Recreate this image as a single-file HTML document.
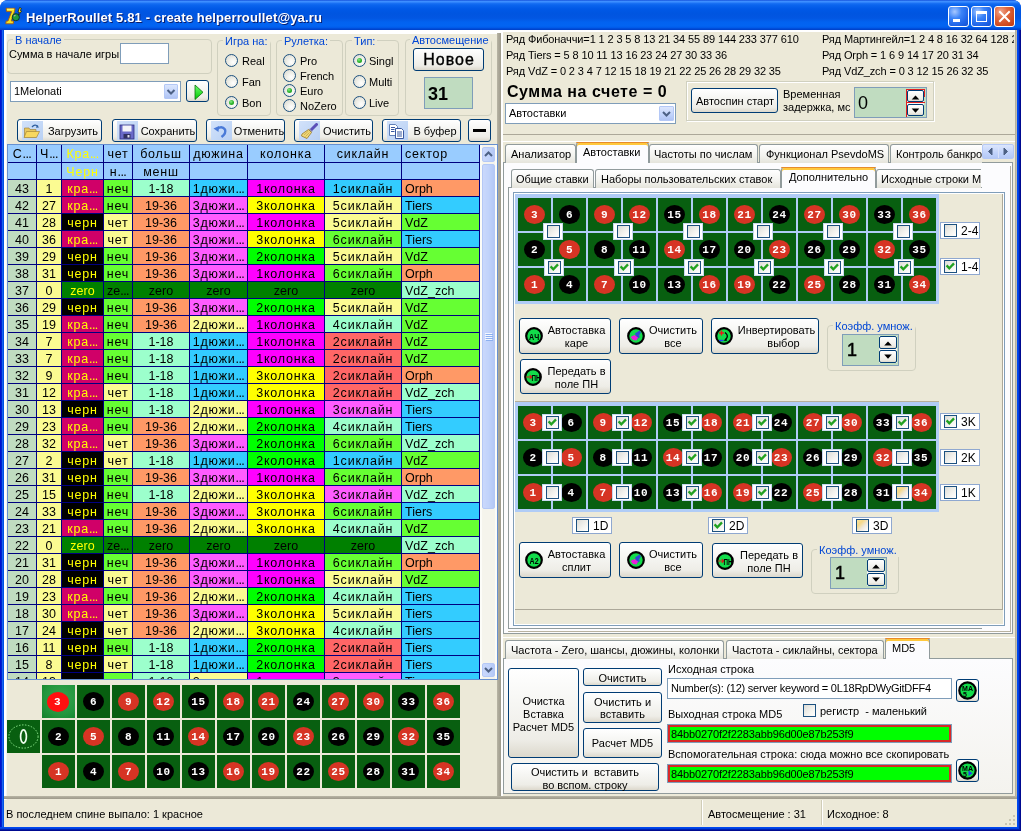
<!DOCTYPE html><html><head><meta charset="utf-8"><title>HelperRoullet</title><style>
*{margin:0;padding:0;box-sizing:border-box}
html,body{width:1021px;height:831px;overflow:hidden;background:#fff}
body{position:relative;font-family:"Liberation Sans",sans-serif;font-size:11px;color:#000}
div{position:absolute}
.t{white-space:pre}
.btn{border:1px solid #003C74;border-radius:3px;background:linear-gradient(180deg,#FFFFFF 0%,#F6F6F3 40%,#EEEDE7 80%,#DCD8CC 100%)}
.grp{border:1px solid #D0D0BF;border-radius:4px}
.rad{border:1px solid #1C5180;border-radius:50%;background:radial-gradient(circle at 65% 65%,#FFFFFF 0%,#F0F0EA 40%,#D5D5CC 100%)}
.rdot{left:3px;top:3px;width:5px;height:5px;border-radius:50%;background:radial-gradient(circle at 40% 35%,#8CEB8C 0%,#2BB52B 50%,#1C8A1C 100%)}
.chk{border:1px solid #1C5180;background:linear-gradient(135deg,#DCDCD7 0%,#F4F4F0 60%,#FFFFFF 100%)}
.gc{font-size:12.5px;line-height:18px;white-space:nowrap;overflow:hidden}
.num{text-align:center;color:#fff;font-family:"Liberation Mono",monospace;font-weight:bold;white-space:pre}
.sbb{border:1px solid #B4C8F6;border-radius:2px;background:linear-gradient(90deg,#CAD8FC,#C1D3FB 50%,#B4C8F6)}
.cbb{border:1px solid #B4C8F6;border-radius:1px;background:linear-gradient(180deg,#DCE6FD,#C1D3FB 60%,#B0C4F4)}
.chk.hov{background:linear-gradient(135deg,#F9E49F 0%,#F5D88A 30%,#EFE9DE 60%,#FFFFFF 100%)}
</style></head><body><div style="left:0;top:0;width:1021px;height:831px;overflow:hidden;will-change:transform"><div style="left:0;top:0;width:1021px;height:831px;background:#0842D8;border-radius:8px 8px 0 0"></div><div style="left:0;top:0;width:1021px;height:30px;border-radius:8px 8px 0 0;background:linear-gradient(180deg,#0A3FD0 0px,#3B8DFF 1px,#3F8FFF 2px,#1C73F5 3px,#0A64EE 5px,#0058E6 9px,#0055E0 14px,#0256E2 18px,#0262F0 22px,#0264F2 26px,#0058E8 28px,#0043CC 29px,#0043CC 30px)"></div><div style="left:0px;top:30px;width:1px;height:801px;background:#0012D0"></div><div style="left:1px;top:30px;width:1px;height:801px;background:#0024CC"></div><div style="left:2px;top:30px;width:1px;height:801px;background:#1A62F2"></div><div style="left:3px;top:30px;width:1px;height:801px;background:#0052E2"></div><div style="left:1017px;top:30px;width:1px;height:801px;background:#0048F0"></div><div style="left:0px;top:827px;width:1021px;height:1px;background:#0048F0"></div><div style="left:1018px;top:30px;width:1px;height:801px;background:#0040E0"></div><div style="left:0px;top:828px;width:1021px;height:1px;background:#0040E0"></div><div style="left:1019px;top:30px;width:1px;height:801px;background:#0020B0"></div><div style="left:0px;top:829px;width:1021px;height:1px;background:#0020B0"></div><div style="left:1020px;top:30px;width:1px;height:801px;background:#000A90"></div><div style="left:0px;top:830px;width:1021px;height:1px;background:#000A90"></div><div style="left:4px;top:30px;width:1013px;height:797px;background:#ECE9D8"></div><svg style="position:absolute;left:0px;top:0px" width="26" height="28" viewBox="0 0 26 28"><path d="M6 8.3 L15 8.3 L14.6 11.2 L11.2 21 L13.6 21 L13.2 23.8 L5.8 23.8 L6.2 21 L8 21 L11.6 11.6 L6.6 11.6 Z" fill="#F4E020" stroke="#A85A10" stroke-width="0.9" stroke-linejoin="round"/><path d="M7 9.2 L13.8 9.2" stroke="#FFFF90" stroke-width="1"/><circle cx="15.8" cy="17.2" r="3.6" fill="#1E9A40" stroke="#0A2A30" stroke-width="0.9"/><path d="M14 16 L15.5 15.5" stroke="#D8A8B8" stroke-width="1.1"/><path d="M19.6 7.6 L21.4 8.4 L20.2 10.6 L21.6 11 L18.6 15.2 L19.4 12.2 L18 11.8 Z" fill="#FFF020" stroke="#101010" stroke-width="0.7" stroke-linejoin="round"/></svg><div class="t" style="left:27px;top:12.00px;font-size:13px;line-height:13px;color:#0A1E6E;font-weight:bold;letter-spacing:0.14px">HelperRoullet 5.81 - create helperroullet@ya.ru</div><div class="t" style="left:26px;top:11.00px;font-size:13px;line-height:13px;color:#FFFFFF;font-weight:bold;letter-spacing:0.14px">HelperRoullet 5.81 - create helperroullet@ya.ru</div><div style="left:948px;top:6px;width:21px;height:21px;border:1px solid #FFFFFF;border-radius:3px;background:radial-gradient(circle at 30% 25%,#A8C8FF 0%,#3C84F8 35%,#1F64E8 70%,#1450D0 100%)"></div><div style="left:971px;top:6px;width:21px;height:21px;border:1px solid #FFFFFF;border-radius:3px;background:radial-gradient(circle at 30% 25%,#A8C8FF 0%,#3C84F8 35%,#1F64E8 70%,#1450D0 100%)"></div><div style="left:994px;top:6px;width:21px;height:21px;border:1px solid #FFFFFF;border-radius:3px;background:radial-gradient(circle at 30% 25%,#F0A890 0%,#E06840 35%,#D04C20 70%,#C03810 100%)"></div><div style="left:953px;top:19px;width:7px;height:3px;background:#fff"></div><div style="left:976px;top:11px;width:11px;height:11px;border:1px solid #fff;border-top-width:3px"></div><svg style="position:absolute;left:994px;top:6px" width="21" height="21" viewBox="0 0 21 21"><path d="M6 6 L15 15 M15 6 L6 15" stroke="#fff" stroke-width="2" stroke-linecap="square"/></svg><div style="left:4px;top:30px;width:497px;height:770px;background:#ECE9D8;border-top:4px solid #fff;border-left:2px solid #fff;box-shadow:inset 1px 0 0 #F6F5EE"></div><div style="left:497px;top:33px;width:4px;height:766px;background:linear-gradient(90deg,#B9B6A6,#ACA899 40%,#9D9A8B)"></div><div style="left:4px;top:796px;width:497px;height:3px;background:linear-gradient(180deg,#B9B6A6,#ACA899 40%,#9D9A8B)"></div><div class="grp" style="left:7px;top:39px;width:205px;height:35px;"></div><div class="t" style="left:13px;top:34px;height:13px;width:50.8px;background:#ECE9D8"></div><div class="t" style="left:15px;top:34.69px;font-size:11px;line-height:11px;color:#0046D5;font-weight:normal;">В начале</div><div class="t" style="left:9px;top:48.69px;font-size:11px;line-height:11px;color:#000;font-weight:normal;">Сумма в начале игры</div><div style="left:120px;top:43px;width:49px;height:21px;background:#fff;border:1px solid #7F9DB9"></div><div style="left:10px;top:81px;width:171px;height:21px;background:#fff;border:1px solid #7F9DB9"></div><div class="t" style="left:14px;top:85.69px;font-size:11px;line-height:11px;color:#000;font-weight:normal;">1Melonati</div><div class="cbb" style="left:164px;top:84px;width:14px;height:15px"></div><svg style="position:absolute;left:164px;top:84px" width="14" height="15" viewBox="0 0 14 15"><path d="M3.5 6 L7 9.5 L10.5 6" stroke="#4D6185" stroke-width="2" fill="none"/></svg><div class="btn" style="left:186px;top:80px;width:23px;height:22px;"></div><svg style="position:absolute;left:186px;top:80px" width="23" height="22" viewBox="0 0 23 22"><defs><linearGradient id="pg" x1="0" y1="0" x2="0" y2="1"><stop offset="0" stop-color="#70FF70"/><stop offset="1" stop-color="#00C800"/></linearGradient></defs><path d="M9 5 L17 12.3 L9 19.5 Z" fill="url(#pg)" stroke="#087008" stroke-width="0.8"/></svg><div class="grp" style="left:217px;top:40px;width:54px;height:76px;"></div><div class="t" style="left:223px;top:35px;height:13px;width:46.5px;background:#ECE9D8"></div><div class="t" style="left:225px;top:35.69px;font-size:11px;line-height:11px;color:#0046D5;font-weight:normal;">Игра на:</div><div class="rad" style="left:225px;top:54px;width:13px;height:13px;"></div><div class="t" style="left:242px;top:55.69px;font-size:11px;line-height:11px;color:#000;font-weight:normal;">Real</div><div class="rad" style="left:225px;top:75px;width:13px;height:13px;"></div><div class="t" style="left:242px;top:76.69px;font-size:11px;line-height:11px;color:#000;font-weight:normal;">Fan</div><div class="rad" style="left:225px;top:96px;width:13px;height:13px;"><div class="rdot"></div></div><div class="t" style="left:242px;top:97.69px;font-size:11px;line-height:11px;color:#000;font-weight:normal;">Bon</div><div class="grp" style="left:276px;top:40px;width:67px;height:76px;"></div><div class="t" style="left:282px;top:35px;height:13px;width:48.1px;background:#ECE9D8"></div><div class="t" style="left:284px;top:35.69px;font-size:11px;line-height:11px;color:#0046D5;font-weight:normal;">Рулетка:</div><div class="rad" style="left:283px;top:54px;width:13px;height:13px;"></div><div class="t" style="left:300px;top:55.69px;font-size:11px;line-height:11px;color:#000;font-weight:normal;">Pro</div><div class="rad" style="left:283px;top:69px;width:13px;height:13px;"></div><div class="t" style="left:300px;top:70.69px;font-size:11px;line-height:11px;color:#000;font-weight:normal;">French</div><div class="rad" style="left:283px;top:84px;width:13px;height:13px;"><div class="rdot"></div></div><div class="t" style="left:300px;top:85.69px;font-size:11px;line-height:11px;color:#000;font-weight:normal;">Euro</div><div class="rad" style="left:283px;top:99px;width:13px;height:13px;"></div><div class="t" style="left:300px;top:100.69px;font-size:11px;line-height:11px;color:#000;font-weight:normal;">NoZero</div><div class="grp" style="left:345px;top:40px;width:54px;height:76px;"></div><div class="t" style="left:352px;top:35px;height:13px;width:25.4px;background:#ECE9D8"></div><div class="t" style="left:354px;top:35.69px;font-size:11px;line-height:11px;color:#0046D5;font-weight:normal;">Тип:</div><div class="rad" style="left:353px;top:54px;width:13px;height:13px;"><div class="rdot"></div></div><div class="t" style="left:369px;top:55.69px;font-size:11px;line-height:11px;color:#000;font-weight:normal;">Singl</div><div class="rad" style="left:353px;top:75px;width:13px;height:13px;"></div><div class="t" style="left:369px;top:76.69px;font-size:11px;line-height:11px;color:#000;font-weight:normal;">Multi</div><div class="rad" style="left:353px;top:96px;width:13px;height:13px;"></div><div class="t" style="left:369px;top:97.69px;font-size:11px;line-height:11px;color:#000;font-weight:normal;">Live</div><div class="grp" style="left:405px;top:39px;width:87px;height:77px;"></div><div class="t" style="left:410px;top:34px;height:13px;width:80.6px;background:#ECE9D8"></div><div class="t" style="left:412px;top:34.69px;font-size:11px;line-height:11px;color:#0046D5;font-weight:normal;">Автосмещение</div><div class="btn" style="left:413px;top:48px;width:71px;height:23px;"></div><div class="t" style="left:349.0px;width:200px;text-align:center;top:52.46px;font-size:16px;line-height:16px;color:#000;font-weight:normal;letter-spacing:1px;-webkit-text-stroke:0.35px #000">Новое</div><div style="left:424px;top:77px;width:49px;height:32px;background:#C0DCC0;border:1px solid #7F9DB9"></div><div class="t" style="left:428px;top:84.76px;font-size:18px;line-height:18px;color:#000;font-weight:bold;">31</div><div class="btn" style="left:17px;top:119px;width:85px;height:23px;"></div><div style="left:22px;top:121px;width:21px;height:19px;background:linear-gradient(135deg,#D2E2FA,#B8D0F4)"></div><svg style="position:absolute;left:23px;top:123px" width="18" height="17" viewBox="0 0 18 17"><path d="M1.5 5 L6 5 L7 6.5 L13 6.5 L13 14 L1.5 14 Z" fill="#E8C860" stroke="#9A7A30" stroke-width="0.6"/><path d="M3.5 8.5 L16.5 8.5 L13.5 14.5 L1 14.5 Z" fill="#F8D860" stroke="#9A7A30" stroke-width="0.6"/><path d="M9 4 Q12 0.5 15 3.5" stroke="#3060A0" stroke-width="1.3" fill="none"/><path d="M14 2 L16 4.5 L13 4.8 Z" fill="#3060A0"/></svg><div class="t" style="left:-27.0px;width:200px;text-align:center;top:125.69px;font-size:11px;line-height:11px;color:#000;font-weight:normal;">Загрузить</div><div class="btn" style="left:112px;top:119px;width:85px;height:23px;"></div><div style="left:117px;top:121px;width:21px;height:19px;background:linear-gradient(135deg,#D2E2FA,#B8D0F4)"></div><svg style="position:absolute;left:118px;top:123px" width="18" height="17" viewBox="0 0 18 17"><rect x="2" y="2" width="14" height="14" fill="#6A6AC8" stroke="#303080" stroke-width="0.8"/><rect x="4.5" y="2.5" width="9" height="6" fill="#F4F4F8"/><rect x="5.5" y="11" width="7" height="4.5" fill="#303060"/><rect x="9.5" y="12" width="2" height="2.5" fill="#E0E0F0"/></svg><div class="t" style="left:68.0px;width:200px;text-align:center;top:125.69px;font-size:11px;line-height:11px;color:#000;font-weight:normal;">Сохранить</div><div class="btn" style="left:206px;top:119px;width:79px;height:23px;"></div><div style="left:211px;top:121px;width:21px;height:19px;background:linear-gradient(135deg,#D2E2FA,#B8D0F4)"></div><svg style="position:absolute;left:212px;top:123px" width="18" height="17" viewBox="0 0 18 17"><path d="M5 6 Q10 2.5 13 6.5 Q14.5 10.5 9.5 14" stroke="#4A7AD8" stroke-width="2.4" fill="none"/><path d="M1.5 5.5 L7 3 L6.5 9 Z" fill="#4A7AD8"/></svg><div class="t" style="left:159.0px;width:200px;text-align:center;top:125.69px;font-size:11px;line-height:11px;color:#000;font-weight:normal;">Отменить</div><div class="btn" style="left:294px;top:119px;width:79px;height:23px;"></div><div style="left:299px;top:121px;width:21px;height:19px;background:linear-gradient(135deg,#D2E2FA,#B8D0F4)"></div><svg style="position:absolute;left:300px;top:123px" width="18" height="17" viewBox="0 0 18 17"><path d="M16.5 1.5 L11 7" stroke="#5A50B8" stroke-width="3" stroke-linecap="round"/><path d="M9.5 5.5 L12.5 8.5 L11.5 9.5 L8.5 6.5 Z" fill="#9A9AB0"/><path d="M8.5 6.5 L11.5 9.5 L7 15.5 L1.5 13 L2 11 Z" fill="#F0D878" stroke="#9A7A28" stroke-width="0.8"/><path d="M4 12 L8.5 8 M5.5 13.5 L9.5 9.5" stroke="#C8A848" stroke-width="0.8"/></svg><div class="t" style="left:247.0px;width:200px;text-align:center;top:125.69px;font-size:11px;line-height:11px;color:#000;font-weight:normal;">Очистить</div><div class="btn" style="left:382px;top:119px;width:79px;height:23px;"></div><div style="left:387px;top:121px;width:21px;height:19px;background:linear-gradient(135deg,#D2E2FA,#B8D0F4)"></div><svg style="position:absolute;left:388px;top:123px" width="18" height="17" viewBox="0 0 18 17"><path d="M1.5 1.5 L7.5 1.5 L9.5 3.5 L9.5 12.5 L1.5 12.5 Z" fill="#FFFFFF" stroke="#6080B8" stroke-width="1"/><path d="M7.5 5.5 L13.5 5.5 L15.5 7.5 L15.5 15.5 L7.5 15.5 Z" fill="#FFFFFF" stroke="#3858A0" stroke-width="1"/><path d="M9 9 L14 9 M9 11 L14 11 M9 13 L14 13 M3 4.5 L7 4.5 M3 6.5 L6.5 6.5 M3 8.5 L6.5 8.5" stroke="#3858A0" stroke-width="1"/></svg><div class="t" style="left:335.0px;width:200px;text-align:center;top:125.69px;font-size:11px;line-height:11px;color:#000;font-weight:normal;">В буфер</div><div class="btn" style="left:468px;top:119px;width:23px;height:23px;"></div><div style="left:473px;top:129px;width:13px;height:3px;background:#000"></div><div style="left:7px;top:144px;width:491px;height:536px;overflow:hidden;background:#F5F4EC;border:1px solid #6690D0"><div style="left:0px;top:0px;width:472px;height:534px;background:#000080"></div><div class="gc" style="left:0px;top:0px;width:28px;height:17px;background:#99CCFF;color:#000;text-align:center;letter-spacing:0.8px;">С<span style="letter-spacing:-0.6px">...</span></div><div class="gc" style="left:0px;top:18px;width:28px;height:16px;background:#99CCFF;color:#000;text-align:center;"></div><div class="gc" style="left:29px;top:0px;width:24px;height:17px;background:#99CCFF;color:#000;text-align:center;letter-spacing:0.8px;">Ч<span style="letter-spacing:-0.6px">...</span></div><div class="gc" style="left:29px;top:18px;width:24px;height:16px;background:#99CCFF;color:#000;text-align:center;"></div><div class="gc" style="left:54px;top:0px;width:41px;height:17px;background:#99CCFF;color:#FFFF00;text-align:center;letter-spacing:0.8px;">Кра<span style="letter-spacing:-0.6px">...</span></div><div class="gc" style="left:54px;top:18px;width:41px;height:16px;background:#99CCFF;color:#FFFF00;text-align:center;letter-spacing:0.8px;">Черн</div><div class="gc" style="left:96px;top:0px;width:28px;height:17px;background:#99CCFF;color:#000;text-align:center;letter-spacing:0.8px;">чет</div><div class="gc" style="left:96px;top:18px;width:28px;height:16px;background:#99CCFF;color:#000;text-align:center;letter-spacing:0.8px;">н<span style="letter-spacing:-0.6px">...</span></div><div class="gc" style="left:125px;top:0px;width:56px;height:17px;background:#99CCFF;color:#000;text-align:center;letter-spacing:0.8px;">больш</div><div class="gc" style="left:125px;top:18px;width:56px;height:16px;background:#99CCFF;color:#000;text-align:center;letter-spacing:0.8px;">менш</div><div class="gc" style="left:182px;top:0px;width:57px;height:17px;background:#99CCFF;color:#000;text-align:center;letter-spacing:0.8px;">дюжина</div><div class="gc" style="left:182px;top:18px;width:57px;height:16px;background:#99CCFF;color:#000;text-align:center;"></div><div class="gc" style="left:240px;top:0px;width:76px;height:17px;background:#99CCFF;color:#000;text-align:center;letter-spacing:0.8px;">колонка</div><div class="gc" style="left:240px;top:18px;width:76px;height:16px;background:#99CCFF;color:#000;text-align:center;"></div><div class="gc" style="left:317px;top:0px;width:76px;height:17px;background:#99CCFF;color:#000;text-align:center;letter-spacing:0.8px;">сиклайн</div><div class="gc" style="left:317px;top:18px;width:76px;height:16px;background:#99CCFF;color:#000;text-align:center;"></div><div class="gc" style="left:394px;top:0px;width:77px;height:17px;background:#99CCFF;color:#000;text-align:left;padding-left:3px;letter-spacing:0.8px;">сектор</div><div class="gc" style="left:394px;top:18px;width:77px;height:16px;background:#99CCFF;color:#000;text-align:left;padding-left:3px;"></div><div class="gc" style="left:0px;top:35px;width:28px;height:16px;background:#C0DCC0;color:#000;text-align:center;">43</div><div class="gc" style="left:29px;top:35px;width:24px;height:16px;background:#FBFB92;color:#000;text-align:center;">1</div><div class="gc" style="left:54px;top:35px;width:41px;height:16px;background:#D00068;color:#FFFF00;text-align:center;letter-spacing:0.8px;">кра<span style="letter-spacing:-0.6px">...</span></div><div class="gc" style="left:96px;top:35px;width:28px;height:16px;background:#66FF33;color:#000;text-align:center;letter-spacing:0.8px;">неч</div><div class="gc" style="left:125px;top:35px;width:56px;height:16px;background:#9CFFCC;color:#000;text-align:center;">1-18</div><div class="gc" style="left:182px;top:35px;width:57px;height:16px;background:#33CCFF;color:#000;text-align:center;letter-spacing:0.8px;">1дюжи<span style="letter-spacing:-0.6px">...</span></div><div class="gc" style="left:240px;top:35px;width:76px;height:16px;background:#FF00FF;color:#000;text-align:center;letter-spacing:0.8px;">1колонка</div><div class="gc" style="left:317px;top:35px;width:76px;height:16px;background:#33CCFF;color:#000;text-align:center;letter-spacing:0.8px;">1сиклайн</div><div class="gc" style="left:394px;top:35px;width:77px;height:16px;background:#FF9966;color:#000;text-align:left;padding-left:3px;">Orph</div><div class="gc" style="left:0px;top:52px;width:28px;height:16px;background:#C0DCC0;color:#000;text-align:center;">42</div><div class="gc" style="left:29px;top:52px;width:24px;height:16px;background:#FBFB92;color:#000;text-align:center;">27</div><div class="gc" style="left:54px;top:52px;width:41px;height:16px;background:#D00068;color:#FFFF00;text-align:center;letter-spacing:0.8px;">кра<span style="letter-spacing:-0.6px">...</span></div><div class="gc" style="left:96px;top:52px;width:28px;height:16px;background:#66FF33;color:#000;text-align:center;letter-spacing:0.8px;">неч</div><div class="gc" style="left:125px;top:52px;width:56px;height:16px;background:#FF9966;color:#000;text-align:center;">19-36</div><div class="gc" style="left:182px;top:52px;width:57px;height:16px;background:#FF5CFF;color:#000;text-align:center;letter-spacing:0.8px;">3дюжи<span style="letter-spacing:-0.6px">...</span></div><div class="gc" style="left:240px;top:52px;width:76px;height:16px;background:#FFFF00;color:#000;text-align:center;letter-spacing:0.8px;">3колонка</div><div class="gc" style="left:317px;top:52px;width:76px;height:16px;background:#FBFB92;color:#000;text-align:center;letter-spacing:0.8px;">5сиклайн</div><div class="gc" style="left:394px;top:52px;width:77px;height:16px;background:#33CCFF;color:#000;text-align:left;padding-left:3px;">Tiers</div><div class="gc" style="left:0px;top:69px;width:28px;height:16px;background:#C0DCC0;color:#000;text-align:center;">41</div><div class="gc" style="left:29px;top:69px;width:24px;height:16px;background:#FBFB92;color:#000;text-align:center;">28</div><div class="gc" style="left:54px;top:69px;width:41px;height:16px;background:#000000;color:#FFFF00;text-align:center;letter-spacing:0.8px;">черн</div><div class="gc" style="left:96px;top:69px;width:28px;height:16px;background:#FBFB92;color:#000;text-align:center;letter-spacing:0.8px;">чет</div><div class="gc" style="left:125px;top:69px;width:56px;height:16px;background:#FF9966;color:#000;text-align:center;">19-36</div><div class="gc" style="left:182px;top:69px;width:57px;height:16px;background:#FF5CFF;color:#000;text-align:center;letter-spacing:0.8px;">3дюжи<span style="letter-spacing:-0.6px">...</span></div><div class="gc" style="left:240px;top:69px;width:76px;height:16px;background:#FF00FF;color:#000;text-align:center;letter-spacing:0.8px;">1колонка</div><div class="gc" style="left:317px;top:69px;width:76px;height:16px;background:#FBFB92;color:#000;text-align:center;letter-spacing:0.8px;">5сиклайн</div><div class="gc" style="left:394px;top:69px;width:77px;height:16px;background:#66FF33;color:#000;text-align:left;padding-left:3px;">VdZ</div><div class="gc" style="left:0px;top:86px;width:28px;height:16px;background:#C0DCC0;color:#000;text-align:center;">40</div><div class="gc" style="left:29px;top:86px;width:24px;height:16px;background:#FBFB92;color:#000;text-align:center;">36</div><div class="gc" style="left:54px;top:86px;width:41px;height:16px;background:#D00068;color:#FFFF00;text-align:center;letter-spacing:0.8px;">кра<span style="letter-spacing:-0.6px">...</span></div><div class="gc" style="left:96px;top:86px;width:28px;height:16px;background:#FBFB92;color:#000;text-align:center;letter-spacing:0.8px;">чет</div><div class="gc" style="left:125px;top:86px;width:56px;height:16px;background:#FF9966;color:#000;text-align:center;">19-36</div><div class="gc" style="left:182px;top:86px;width:57px;height:16px;background:#FF5CFF;color:#000;text-align:center;letter-spacing:0.8px;">3дюжи<span style="letter-spacing:-0.6px">...</span></div><div class="gc" style="left:240px;top:86px;width:76px;height:16px;background:#FFFF00;color:#000;text-align:center;letter-spacing:0.8px;">3колонка</div><div class="gc" style="left:317px;top:86px;width:76px;height:16px;background:#66FF33;color:#000;text-align:center;letter-spacing:0.8px;">6сиклайн</div><div class="gc" style="left:394px;top:86px;width:77px;height:16px;background:#33CCFF;color:#000;text-align:left;padding-left:3px;">Tiers</div><div class="gc" style="left:0px;top:103px;width:28px;height:16px;background:#C0DCC0;color:#000;text-align:center;">39</div><div class="gc" style="left:29px;top:103px;width:24px;height:16px;background:#FBFB92;color:#000;text-align:center;">29</div><div class="gc" style="left:54px;top:103px;width:41px;height:16px;background:#000000;color:#FFFF00;text-align:center;letter-spacing:0.8px;">черн</div><div class="gc" style="left:96px;top:103px;width:28px;height:16px;background:#66FF33;color:#000;text-align:center;letter-spacing:0.8px;">неч</div><div class="gc" style="left:125px;top:103px;width:56px;height:16px;background:#FF9966;color:#000;text-align:center;">19-36</div><div class="gc" style="left:182px;top:103px;width:57px;height:16px;background:#FF5CFF;color:#000;text-align:center;letter-spacing:0.8px;">3дюжи<span style="letter-spacing:-0.6px">...</span></div><div class="gc" style="left:240px;top:103px;width:76px;height:16px;background:#00FF00;color:#000;text-align:center;letter-spacing:0.8px;">2колонка</div><div class="gc" style="left:317px;top:103px;width:76px;height:16px;background:#FBFB92;color:#000;text-align:center;letter-spacing:0.8px;">5сиклайн</div><div class="gc" style="left:394px;top:103px;width:77px;height:16px;background:#66FF33;color:#000;text-align:left;padding-left:3px;">VdZ</div><div class="gc" style="left:0px;top:120px;width:28px;height:16px;background:#C0DCC0;color:#000;text-align:center;">38</div><div class="gc" style="left:29px;top:120px;width:24px;height:16px;background:#FBFB92;color:#000;text-align:center;">31</div><div class="gc" style="left:54px;top:120px;width:41px;height:16px;background:#000000;color:#FFFF00;text-align:center;letter-spacing:0.8px;">черн</div><div class="gc" style="left:96px;top:120px;width:28px;height:16px;background:#66FF33;color:#000;text-align:center;letter-spacing:0.8px;">неч</div><div class="gc" style="left:125px;top:120px;width:56px;height:16px;background:#FF9966;color:#000;text-align:center;">19-36</div><div class="gc" style="left:182px;top:120px;width:57px;height:16px;background:#FF5CFF;color:#000;text-align:center;letter-spacing:0.8px;">3дюжи<span style="letter-spacing:-0.6px">...</span></div><div class="gc" style="left:240px;top:120px;width:76px;height:16px;background:#FF00FF;color:#000;text-align:center;letter-spacing:0.8px;">1колонка</div><div class="gc" style="left:317px;top:120px;width:76px;height:16px;background:#66FF33;color:#000;text-align:center;letter-spacing:0.8px;">6сиклайн</div><div class="gc" style="left:394px;top:120px;width:77px;height:16px;background:#FF9966;color:#000;text-align:left;padding-left:3px;">Orph</div><div class="gc" style="left:0px;top:137px;width:28px;height:16px;background:#C0DCC0;color:#000;text-align:center;">37</div><div class="gc" style="left:29px;top:137px;width:24px;height:16px;background:#FBFB92;color:#000;text-align:center;">0</div><div class="gc" style="left:54px;top:137px;width:41px;height:16px;background:#008000;color:#FFFF00;text-align:center;">zero</div><div class="gc" style="left:96px;top:137px;width:28px;height:16px;background:#008000;color:#000;text-align:center;">ze<span style="letter-spacing:-0.6px">...</span></div><div class="gc" style="left:125px;top:137px;width:56px;height:16px;background:#008000;color:#000;text-align:center;">zero</div><div class="gc" style="left:182px;top:137px;width:57px;height:16px;background:#008000;color:#000;text-align:center;">zero</div><div class="gc" style="left:240px;top:137px;width:76px;height:16px;background:#008000;color:#000;text-align:center;">zero</div><div class="gc" style="left:317px;top:137px;width:76px;height:16px;background:#008000;color:#000;text-align:center;">zero</div><div class="gc" style="left:394px;top:137px;width:77px;height:16px;background:#9CFFCC;color:#000;text-align:left;padding-left:3px;">VdZ_zch</div><div class="gc" style="left:0px;top:154px;width:28px;height:16px;background:#C0DCC0;color:#000;text-align:center;">36</div><div class="gc" style="left:29px;top:154px;width:24px;height:16px;background:#FBFB92;color:#000;text-align:center;">29</div><div class="gc" style="left:54px;top:154px;width:41px;height:16px;background:#000000;color:#FFFF00;text-align:center;letter-spacing:0.8px;">черн</div><div class="gc" style="left:96px;top:154px;width:28px;height:16px;background:#66FF33;color:#000;text-align:center;letter-spacing:0.8px;">неч</div><div class="gc" style="left:125px;top:154px;width:56px;height:16px;background:#FF9966;color:#000;text-align:center;">19-36</div><div class="gc" style="left:182px;top:154px;width:57px;height:16px;background:#FF5CFF;color:#000;text-align:center;letter-spacing:0.8px;">3дюжи<span style="letter-spacing:-0.6px">...</span></div><div class="gc" style="left:240px;top:154px;width:76px;height:16px;background:#00FF00;color:#000;text-align:center;letter-spacing:0.8px;">2колонка</div><div class="gc" style="left:317px;top:154px;width:76px;height:16px;background:#FBFB92;color:#000;text-align:center;letter-spacing:0.8px;">5сиклайн</div><div class="gc" style="left:394px;top:154px;width:77px;height:16px;background:#66FF33;color:#000;text-align:left;padding-left:3px;">VdZ</div><div class="gc" style="left:0px;top:171px;width:28px;height:16px;background:#C0DCC0;color:#000;text-align:center;">35</div><div class="gc" style="left:29px;top:171px;width:24px;height:16px;background:#FBFB92;color:#000;text-align:center;">19</div><div class="gc" style="left:54px;top:171px;width:41px;height:16px;background:#D00068;color:#FFFF00;text-align:center;letter-spacing:0.8px;">кра<span style="letter-spacing:-0.6px">...</span></div><div class="gc" style="left:96px;top:171px;width:28px;height:16px;background:#66FF33;color:#000;text-align:center;letter-spacing:0.8px;">неч</div><div class="gc" style="left:125px;top:171px;width:56px;height:16px;background:#FF9966;color:#000;text-align:center;">19-36</div><div class="gc" style="left:182px;top:171px;width:57px;height:16px;background:#FBFB92;color:#000;text-align:center;letter-spacing:0.8px;">2дюжи<span style="letter-spacing:-0.6px">...</span></div><div class="gc" style="left:240px;top:171px;width:76px;height:16px;background:#FF00FF;color:#000;text-align:center;letter-spacing:0.8px;">1колонка</div><div class="gc" style="left:317px;top:171px;width:76px;height:16px;background:#9CFFCC;color:#000;text-align:center;letter-spacing:0.8px;">4сиклайн</div><div class="gc" style="left:394px;top:171px;width:77px;height:16px;background:#66FF33;color:#000;text-align:left;padding-left:3px;">VdZ</div><div class="gc" style="left:0px;top:188px;width:28px;height:16px;background:#C0DCC0;color:#000;text-align:center;">34</div><div class="gc" style="left:29px;top:188px;width:24px;height:16px;background:#FBFB92;color:#000;text-align:center;">7</div><div class="gc" style="left:54px;top:188px;width:41px;height:16px;background:#D00068;color:#FFFF00;text-align:center;letter-spacing:0.8px;">кра<span style="letter-spacing:-0.6px">...</span></div><div class="gc" style="left:96px;top:188px;width:28px;height:16px;background:#66FF33;color:#000;text-align:center;letter-spacing:0.8px;">неч</div><div class="gc" style="left:125px;top:188px;width:56px;height:16px;background:#9CFFCC;color:#000;text-align:center;">1-18</div><div class="gc" style="left:182px;top:188px;width:57px;height:16px;background:#33CCFF;color:#000;text-align:center;letter-spacing:0.8px;">1дюжи<span style="letter-spacing:-0.6px">...</span></div><div class="gc" style="left:240px;top:188px;width:76px;height:16px;background:#FF00FF;color:#000;text-align:center;letter-spacing:0.8px;">1колонка</div><div class="gc" style="left:317px;top:188px;width:76px;height:16px;background:#FF6666;color:#000;text-align:center;letter-spacing:0.8px;">2сиклайн</div><div class="gc" style="left:394px;top:188px;width:77px;height:16px;background:#66FF33;color:#000;text-align:left;padding-left:3px;">VdZ</div><div class="gc" style="left:0px;top:205px;width:28px;height:16px;background:#C0DCC0;color:#000;text-align:center;">33</div><div class="gc" style="left:29px;top:205px;width:24px;height:16px;background:#FBFB92;color:#000;text-align:center;">7</div><div class="gc" style="left:54px;top:205px;width:41px;height:16px;background:#D00068;color:#FFFF00;text-align:center;letter-spacing:0.8px;">кра<span style="letter-spacing:-0.6px">...</span></div><div class="gc" style="left:96px;top:205px;width:28px;height:16px;background:#66FF33;color:#000;text-align:center;letter-spacing:0.8px;">неч</div><div class="gc" style="left:125px;top:205px;width:56px;height:16px;background:#9CFFCC;color:#000;text-align:center;">1-18</div><div class="gc" style="left:182px;top:205px;width:57px;height:16px;background:#33CCFF;color:#000;text-align:center;letter-spacing:0.8px;">1дюжи<span style="letter-spacing:-0.6px">...</span></div><div class="gc" style="left:240px;top:205px;width:76px;height:16px;background:#FF00FF;color:#000;text-align:center;letter-spacing:0.8px;">1колонка</div><div class="gc" style="left:317px;top:205px;width:76px;height:16px;background:#FF6666;color:#000;text-align:center;letter-spacing:0.8px;">2сиклайн</div><div class="gc" style="left:394px;top:205px;width:77px;height:16px;background:#66FF33;color:#000;text-align:left;padding-left:3px;">VdZ</div><div class="gc" style="left:0px;top:222px;width:28px;height:16px;background:#C0DCC0;color:#000;text-align:center;">32</div><div class="gc" style="left:29px;top:222px;width:24px;height:16px;background:#FBFB92;color:#000;text-align:center;">9</div><div class="gc" style="left:54px;top:222px;width:41px;height:16px;background:#D00068;color:#FFFF00;text-align:center;letter-spacing:0.8px;">кра<span style="letter-spacing:-0.6px">...</span></div><div class="gc" style="left:96px;top:222px;width:28px;height:16px;background:#66FF33;color:#000;text-align:center;letter-spacing:0.8px;">неч</div><div class="gc" style="left:125px;top:222px;width:56px;height:16px;background:#9CFFCC;color:#000;text-align:center;">1-18</div><div class="gc" style="left:182px;top:222px;width:57px;height:16px;background:#33CCFF;color:#000;text-align:center;letter-spacing:0.8px;">1дюжи<span style="letter-spacing:-0.6px">...</span></div><div class="gc" style="left:240px;top:222px;width:76px;height:16px;background:#FFFF00;color:#000;text-align:center;letter-spacing:0.8px;">3колонка</div><div class="gc" style="left:317px;top:222px;width:76px;height:16px;background:#FF6666;color:#000;text-align:center;letter-spacing:0.8px;">2сиклайн</div><div class="gc" style="left:394px;top:222px;width:77px;height:16px;background:#FF9966;color:#000;text-align:left;padding-left:3px;">Orph</div><div class="gc" style="left:0px;top:239px;width:28px;height:16px;background:#C0DCC0;color:#000;text-align:center;">31</div><div class="gc" style="left:29px;top:239px;width:24px;height:16px;background:#FBFB92;color:#000;text-align:center;">12</div><div class="gc" style="left:54px;top:239px;width:41px;height:16px;background:#D00068;color:#FFFF00;text-align:center;letter-spacing:0.8px;">кра<span style="letter-spacing:-0.6px">...</span></div><div class="gc" style="left:96px;top:239px;width:28px;height:16px;background:#FBFB92;color:#000;text-align:center;letter-spacing:0.8px;">чет</div><div class="gc" style="left:125px;top:239px;width:56px;height:16px;background:#9CFFCC;color:#000;text-align:center;">1-18</div><div class="gc" style="left:182px;top:239px;width:57px;height:16px;background:#33CCFF;color:#000;text-align:center;letter-spacing:0.8px;">1дюжи<span style="letter-spacing:-0.6px">...</span></div><div class="gc" style="left:240px;top:239px;width:76px;height:16px;background:#FFFF00;color:#000;text-align:center;letter-spacing:0.8px;">3колонка</div><div class="gc" style="left:317px;top:239px;width:76px;height:16px;background:#FF6666;color:#000;text-align:center;letter-spacing:0.8px;">2сиклайн</div><div class="gc" style="left:394px;top:239px;width:77px;height:16px;background:#9CFFCC;color:#000;text-align:left;padding-left:3px;">VdZ_zch</div><div class="gc" style="left:0px;top:256px;width:28px;height:16px;background:#C0DCC0;color:#000;text-align:center;">30</div><div class="gc" style="left:29px;top:256px;width:24px;height:16px;background:#FBFB92;color:#000;text-align:center;">13</div><div class="gc" style="left:54px;top:256px;width:41px;height:16px;background:#000000;color:#FFFF00;text-align:center;letter-spacing:0.8px;">черн</div><div class="gc" style="left:96px;top:256px;width:28px;height:16px;background:#66FF33;color:#000;text-align:center;letter-spacing:0.8px;">неч</div><div class="gc" style="left:125px;top:256px;width:56px;height:16px;background:#9CFFCC;color:#000;text-align:center;">1-18</div><div class="gc" style="left:182px;top:256px;width:57px;height:16px;background:#FBFB92;color:#000;text-align:center;letter-spacing:0.8px;">2дюжи<span style="letter-spacing:-0.6px">...</span></div><div class="gc" style="left:240px;top:256px;width:76px;height:16px;background:#FF00FF;color:#000;text-align:center;letter-spacing:0.8px;">1колонка</div><div class="gc" style="left:317px;top:256px;width:76px;height:16px;background:#FF5CFF;color:#000;text-align:center;letter-spacing:0.8px;">3сиклайн</div><div class="gc" style="left:394px;top:256px;width:77px;height:16px;background:#33CCFF;color:#000;text-align:left;padding-left:3px;">Tiers</div><div class="gc" style="left:0px;top:273px;width:28px;height:16px;background:#C0DCC0;color:#000;text-align:center;">29</div><div class="gc" style="left:29px;top:273px;width:24px;height:16px;background:#FBFB92;color:#000;text-align:center;">23</div><div class="gc" style="left:54px;top:273px;width:41px;height:16px;background:#D00068;color:#FFFF00;text-align:center;letter-spacing:0.8px;">кра<span style="letter-spacing:-0.6px">...</span></div><div class="gc" style="left:96px;top:273px;width:28px;height:16px;background:#66FF33;color:#000;text-align:center;letter-spacing:0.8px;">неч</div><div class="gc" style="left:125px;top:273px;width:56px;height:16px;background:#FF9966;color:#000;text-align:center;">19-36</div><div class="gc" style="left:182px;top:273px;width:57px;height:16px;background:#FBFB92;color:#000;text-align:center;letter-spacing:0.8px;">2дюжи<span style="letter-spacing:-0.6px">...</span></div><div class="gc" style="left:240px;top:273px;width:76px;height:16px;background:#00FF00;color:#000;text-align:center;letter-spacing:0.8px;">2колонка</div><div class="gc" style="left:317px;top:273px;width:76px;height:16px;background:#9CFFCC;color:#000;text-align:center;letter-spacing:0.8px;">4сиклайн</div><div class="gc" style="left:394px;top:273px;width:77px;height:16px;background:#33CCFF;color:#000;text-align:left;padding-left:3px;">Tiers</div><div class="gc" style="left:0px;top:290px;width:28px;height:16px;background:#C0DCC0;color:#000;text-align:center;">28</div><div class="gc" style="left:29px;top:290px;width:24px;height:16px;background:#FBFB92;color:#000;text-align:center;">32</div><div class="gc" style="left:54px;top:290px;width:41px;height:16px;background:#D00068;color:#FFFF00;text-align:center;letter-spacing:0.8px;">кра<span style="letter-spacing:-0.6px">...</span></div><div class="gc" style="left:96px;top:290px;width:28px;height:16px;background:#FBFB92;color:#000;text-align:center;letter-spacing:0.8px;">чет</div><div class="gc" style="left:125px;top:290px;width:56px;height:16px;background:#FF9966;color:#000;text-align:center;">19-36</div><div class="gc" style="left:182px;top:290px;width:57px;height:16px;background:#FF5CFF;color:#000;text-align:center;letter-spacing:0.8px;">3дюжи<span style="letter-spacing:-0.6px">...</span></div><div class="gc" style="left:240px;top:290px;width:76px;height:16px;background:#00FF00;color:#000;text-align:center;letter-spacing:0.8px;">2колонка</div><div class="gc" style="left:317px;top:290px;width:76px;height:16px;background:#66FF33;color:#000;text-align:center;letter-spacing:0.8px;">6сиклайн</div><div class="gc" style="left:394px;top:290px;width:77px;height:16px;background:#9CFFCC;color:#000;text-align:left;padding-left:3px;">VdZ_zch</div><div class="gc" style="left:0px;top:307px;width:28px;height:16px;background:#C0DCC0;color:#000;text-align:center;">27</div><div class="gc" style="left:29px;top:307px;width:24px;height:16px;background:#FBFB92;color:#000;text-align:center;">2</div><div class="gc" style="left:54px;top:307px;width:41px;height:16px;background:#000000;color:#FFFF00;text-align:center;letter-spacing:0.8px;">черн</div><div class="gc" style="left:96px;top:307px;width:28px;height:16px;background:#FBFB92;color:#000;text-align:center;letter-spacing:0.8px;">чет</div><div class="gc" style="left:125px;top:307px;width:56px;height:16px;background:#9CFFCC;color:#000;text-align:center;">1-18</div><div class="gc" style="left:182px;top:307px;width:57px;height:16px;background:#33CCFF;color:#000;text-align:center;letter-spacing:0.8px;">1дюжи<span style="letter-spacing:-0.6px">...</span></div><div class="gc" style="left:240px;top:307px;width:76px;height:16px;background:#00FF00;color:#000;text-align:center;letter-spacing:0.8px;">2колонка</div><div class="gc" style="left:317px;top:307px;width:76px;height:16px;background:#33CCFF;color:#000;text-align:center;letter-spacing:0.8px;">1сиклайн</div><div class="gc" style="left:394px;top:307px;width:77px;height:16px;background:#66FF33;color:#000;text-align:left;padding-left:3px;">VdZ</div><div class="gc" style="left:0px;top:324px;width:28px;height:16px;background:#C0DCC0;color:#000;text-align:center;">26</div><div class="gc" style="left:29px;top:324px;width:24px;height:16px;background:#FBFB92;color:#000;text-align:center;">31</div><div class="gc" style="left:54px;top:324px;width:41px;height:16px;background:#000000;color:#FFFF00;text-align:center;letter-spacing:0.8px;">черн</div><div class="gc" style="left:96px;top:324px;width:28px;height:16px;background:#66FF33;color:#000;text-align:center;letter-spacing:0.8px;">неч</div><div class="gc" style="left:125px;top:324px;width:56px;height:16px;background:#FF9966;color:#000;text-align:center;">19-36</div><div class="gc" style="left:182px;top:324px;width:57px;height:16px;background:#FF5CFF;color:#000;text-align:center;letter-spacing:0.8px;">3дюжи<span style="letter-spacing:-0.6px">...</span></div><div class="gc" style="left:240px;top:324px;width:76px;height:16px;background:#FF00FF;color:#000;text-align:center;letter-spacing:0.8px;">1колонка</div><div class="gc" style="left:317px;top:324px;width:76px;height:16px;background:#66FF33;color:#000;text-align:center;letter-spacing:0.8px;">6сиклайн</div><div class="gc" style="left:394px;top:324px;width:77px;height:16px;background:#FF9966;color:#000;text-align:left;padding-left:3px;">Orph</div><div class="gc" style="left:0px;top:341px;width:28px;height:16px;background:#C0DCC0;color:#000;text-align:center;">25</div><div class="gc" style="left:29px;top:341px;width:24px;height:16px;background:#FBFB92;color:#000;text-align:center;">15</div><div class="gc" style="left:54px;top:341px;width:41px;height:16px;background:#000000;color:#FFFF00;text-align:center;letter-spacing:0.8px;">черн</div><div class="gc" style="left:96px;top:341px;width:28px;height:16px;background:#66FF33;color:#000;text-align:center;letter-spacing:0.8px;">неч</div><div class="gc" style="left:125px;top:341px;width:56px;height:16px;background:#9CFFCC;color:#000;text-align:center;">1-18</div><div class="gc" style="left:182px;top:341px;width:57px;height:16px;background:#FBFB92;color:#000;text-align:center;letter-spacing:0.8px;">2дюжи<span style="letter-spacing:-0.6px">...</span></div><div class="gc" style="left:240px;top:341px;width:76px;height:16px;background:#FFFF00;color:#000;text-align:center;letter-spacing:0.8px;">3колонка</div><div class="gc" style="left:317px;top:341px;width:76px;height:16px;background:#FF5CFF;color:#000;text-align:center;letter-spacing:0.8px;">3сиклайн</div><div class="gc" style="left:394px;top:341px;width:77px;height:16px;background:#9CFFCC;color:#000;text-align:left;padding-left:3px;">VdZ_zch</div><div class="gc" style="left:0px;top:358px;width:28px;height:16px;background:#C0DCC0;color:#000;text-align:center;">24</div><div class="gc" style="left:29px;top:358px;width:24px;height:16px;background:#FBFB92;color:#000;text-align:center;">33</div><div class="gc" style="left:54px;top:358px;width:41px;height:16px;background:#000000;color:#FFFF00;text-align:center;letter-spacing:0.8px;">черн</div><div class="gc" style="left:96px;top:358px;width:28px;height:16px;background:#66FF33;color:#000;text-align:center;letter-spacing:0.8px;">неч</div><div class="gc" style="left:125px;top:358px;width:56px;height:16px;background:#FF9966;color:#000;text-align:center;">19-36</div><div class="gc" style="left:182px;top:358px;width:57px;height:16px;background:#FF5CFF;color:#000;text-align:center;letter-spacing:0.8px;">3дюжи<span style="letter-spacing:-0.6px">...</span></div><div class="gc" style="left:240px;top:358px;width:76px;height:16px;background:#FFFF00;color:#000;text-align:center;letter-spacing:0.8px;">3колонка</div><div class="gc" style="left:317px;top:358px;width:76px;height:16px;background:#66FF33;color:#000;text-align:center;letter-spacing:0.8px;">6сиклайн</div><div class="gc" style="left:394px;top:358px;width:77px;height:16px;background:#33CCFF;color:#000;text-align:left;padding-left:3px;">Tiers</div><div class="gc" style="left:0px;top:375px;width:28px;height:16px;background:#C0DCC0;color:#000;text-align:center;">23</div><div class="gc" style="left:29px;top:375px;width:24px;height:16px;background:#FBFB92;color:#000;text-align:center;">21</div><div class="gc" style="left:54px;top:375px;width:41px;height:16px;background:#D00068;color:#FFFF00;text-align:center;letter-spacing:0.8px;">кра<span style="letter-spacing:-0.6px">...</span></div><div class="gc" style="left:96px;top:375px;width:28px;height:16px;background:#66FF33;color:#000;text-align:center;letter-spacing:0.8px;">неч</div><div class="gc" style="left:125px;top:375px;width:56px;height:16px;background:#FF9966;color:#000;text-align:center;">19-36</div><div class="gc" style="left:182px;top:375px;width:57px;height:16px;background:#FBFB92;color:#000;text-align:center;letter-spacing:0.8px;">2дюжи<span style="letter-spacing:-0.6px">...</span></div><div class="gc" style="left:240px;top:375px;width:76px;height:16px;background:#FFFF00;color:#000;text-align:center;letter-spacing:0.8px;">3колонка</div><div class="gc" style="left:317px;top:375px;width:76px;height:16px;background:#9CFFCC;color:#000;text-align:center;letter-spacing:0.8px;">4сиклайн</div><div class="gc" style="left:394px;top:375px;width:77px;height:16px;background:#66FF33;color:#000;text-align:left;padding-left:3px;">VdZ</div><div class="gc" style="left:0px;top:392px;width:28px;height:16px;background:#C0DCC0;color:#000;text-align:center;">22</div><div class="gc" style="left:29px;top:392px;width:24px;height:16px;background:#FBFB92;color:#000;text-align:center;">0</div><div class="gc" style="left:54px;top:392px;width:41px;height:16px;background:#008000;color:#FFFF00;text-align:center;">zero</div><div class="gc" style="left:96px;top:392px;width:28px;height:16px;background:#008000;color:#000;text-align:center;">ze<span style="letter-spacing:-0.6px">...</span></div><div class="gc" style="left:125px;top:392px;width:56px;height:16px;background:#008000;color:#000;text-align:center;">zero</div><div class="gc" style="left:182px;top:392px;width:57px;height:16px;background:#008000;color:#000;text-align:center;">zero</div><div class="gc" style="left:240px;top:392px;width:76px;height:16px;background:#008000;color:#000;text-align:center;">zero</div><div class="gc" style="left:317px;top:392px;width:76px;height:16px;background:#008000;color:#000;text-align:center;">zero</div><div class="gc" style="left:394px;top:392px;width:77px;height:16px;background:#9CFFCC;color:#000;text-align:left;padding-left:3px;">VdZ_zch</div><div class="gc" style="left:0px;top:409px;width:28px;height:16px;background:#C0DCC0;color:#000;text-align:center;">21</div><div class="gc" style="left:29px;top:409px;width:24px;height:16px;background:#FBFB92;color:#000;text-align:center;">31</div><div class="gc" style="left:54px;top:409px;width:41px;height:16px;background:#000000;color:#FFFF00;text-align:center;letter-spacing:0.8px;">черн</div><div class="gc" style="left:96px;top:409px;width:28px;height:16px;background:#66FF33;color:#000;text-align:center;letter-spacing:0.8px;">неч</div><div class="gc" style="left:125px;top:409px;width:56px;height:16px;background:#FF9966;color:#000;text-align:center;">19-36</div><div class="gc" style="left:182px;top:409px;width:57px;height:16px;background:#FF5CFF;color:#000;text-align:center;letter-spacing:0.8px;">3дюжи<span style="letter-spacing:-0.6px">...</span></div><div class="gc" style="left:240px;top:409px;width:76px;height:16px;background:#FF00FF;color:#000;text-align:center;letter-spacing:0.8px;">1колонка</div><div class="gc" style="left:317px;top:409px;width:76px;height:16px;background:#66FF33;color:#000;text-align:center;letter-spacing:0.8px;">6сиклайн</div><div class="gc" style="left:394px;top:409px;width:77px;height:16px;background:#FF9966;color:#000;text-align:left;padding-left:3px;">Orph</div><div class="gc" style="left:0px;top:426px;width:28px;height:16px;background:#C0DCC0;color:#000;text-align:center;">20</div><div class="gc" style="left:29px;top:426px;width:24px;height:16px;background:#FBFB92;color:#000;text-align:center;">28</div><div class="gc" style="left:54px;top:426px;width:41px;height:16px;background:#000000;color:#FFFF00;text-align:center;letter-spacing:0.8px;">черн</div><div class="gc" style="left:96px;top:426px;width:28px;height:16px;background:#FBFB92;color:#000;text-align:center;letter-spacing:0.8px;">чет</div><div class="gc" style="left:125px;top:426px;width:56px;height:16px;background:#FF9966;color:#000;text-align:center;">19-36</div><div class="gc" style="left:182px;top:426px;width:57px;height:16px;background:#FF5CFF;color:#000;text-align:center;letter-spacing:0.8px;">3дюжи<span style="letter-spacing:-0.6px">...</span></div><div class="gc" style="left:240px;top:426px;width:76px;height:16px;background:#FF00FF;color:#000;text-align:center;letter-spacing:0.8px;">1колонка</div><div class="gc" style="left:317px;top:426px;width:76px;height:16px;background:#FBFB92;color:#000;text-align:center;letter-spacing:0.8px;">5сиклайн</div><div class="gc" style="left:394px;top:426px;width:77px;height:16px;background:#66FF33;color:#000;text-align:left;padding-left:3px;">VdZ</div><div class="gc" style="left:0px;top:443px;width:28px;height:16px;background:#C0DCC0;color:#000;text-align:center;">19</div><div class="gc" style="left:29px;top:443px;width:24px;height:16px;background:#FBFB92;color:#000;text-align:center;">23</div><div class="gc" style="left:54px;top:443px;width:41px;height:16px;background:#D00068;color:#FFFF00;text-align:center;letter-spacing:0.8px;">кра<span style="letter-spacing:-0.6px">...</span></div><div class="gc" style="left:96px;top:443px;width:28px;height:16px;background:#66FF33;color:#000;text-align:center;letter-spacing:0.8px;">неч</div><div class="gc" style="left:125px;top:443px;width:56px;height:16px;background:#FF9966;color:#000;text-align:center;">19-36</div><div class="gc" style="left:182px;top:443px;width:57px;height:16px;background:#FBFB92;color:#000;text-align:center;letter-spacing:0.8px;">2дюжи<span style="letter-spacing:-0.6px">...</span></div><div class="gc" style="left:240px;top:443px;width:76px;height:16px;background:#00FF00;color:#000;text-align:center;letter-spacing:0.8px;">2колонка</div><div class="gc" style="left:317px;top:443px;width:76px;height:16px;background:#9CFFCC;color:#000;text-align:center;letter-spacing:0.8px;">4сиклайн</div><div class="gc" style="left:394px;top:443px;width:77px;height:16px;background:#33CCFF;color:#000;text-align:left;padding-left:3px;">Tiers</div><div class="gc" style="left:0px;top:460px;width:28px;height:16px;background:#C0DCC0;color:#000;text-align:center;">18</div><div class="gc" style="left:29px;top:460px;width:24px;height:16px;background:#FBFB92;color:#000;text-align:center;">30</div><div class="gc" style="left:54px;top:460px;width:41px;height:16px;background:#D00068;color:#FFFF00;text-align:center;letter-spacing:0.8px;">кра<span style="letter-spacing:-0.6px">...</span></div><div class="gc" style="left:96px;top:460px;width:28px;height:16px;background:#FBFB92;color:#000;text-align:center;letter-spacing:0.8px;">чет</div><div class="gc" style="left:125px;top:460px;width:56px;height:16px;background:#FF9966;color:#000;text-align:center;">19-36</div><div class="gc" style="left:182px;top:460px;width:57px;height:16px;background:#FF5CFF;color:#000;text-align:center;letter-spacing:0.8px;">3дюжи<span style="letter-spacing:-0.6px">...</span></div><div class="gc" style="left:240px;top:460px;width:76px;height:16px;background:#FFFF00;color:#000;text-align:center;letter-spacing:0.8px;">3колонка</div><div class="gc" style="left:317px;top:460px;width:76px;height:16px;background:#FBFB92;color:#000;text-align:center;letter-spacing:0.8px;">5сиклайн</div><div class="gc" style="left:394px;top:460px;width:77px;height:16px;background:#33CCFF;color:#000;text-align:left;padding-left:3px;">Tiers</div><div class="gc" style="left:0px;top:477px;width:28px;height:16px;background:#C0DCC0;color:#000;text-align:center;">17</div><div class="gc" style="left:29px;top:477px;width:24px;height:16px;background:#FBFB92;color:#000;text-align:center;">24</div><div class="gc" style="left:54px;top:477px;width:41px;height:16px;background:#000000;color:#FFFF00;text-align:center;letter-spacing:0.8px;">черн</div><div class="gc" style="left:96px;top:477px;width:28px;height:16px;background:#FBFB92;color:#000;text-align:center;letter-spacing:0.8px;">чет</div><div class="gc" style="left:125px;top:477px;width:56px;height:16px;background:#FF9966;color:#000;text-align:center;">19-36</div><div class="gc" style="left:182px;top:477px;width:57px;height:16px;background:#FBFB92;color:#000;text-align:center;letter-spacing:0.8px;">2дюжи<span style="letter-spacing:-0.6px">...</span></div><div class="gc" style="left:240px;top:477px;width:76px;height:16px;background:#FFFF00;color:#000;text-align:center;letter-spacing:0.8px;">3колонка</div><div class="gc" style="left:317px;top:477px;width:76px;height:16px;background:#9CFFCC;color:#000;text-align:center;letter-spacing:0.8px;">4сиклайн</div><div class="gc" style="left:394px;top:477px;width:77px;height:16px;background:#33CCFF;color:#000;text-align:left;padding-left:3px;">Tiers</div><div class="gc" style="left:0px;top:494px;width:28px;height:16px;background:#C0DCC0;color:#000;text-align:center;">16</div><div class="gc" style="left:29px;top:494px;width:24px;height:16px;background:#FBFB92;color:#000;text-align:center;">11</div><div class="gc" style="left:54px;top:494px;width:41px;height:16px;background:#000000;color:#FFFF00;text-align:center;letter-spacing:0.8px;">черн</div><div class="gc" style="left:96px;top:494px;width:28px;height:16px;background:#66FF33;color:#000;text-align:center;letter-spacing:0.8px;">неч</div><div class="gc" style="left:125px;top:494px;width:56px;height:16px;background:#9CFFCC;color:#000;text-align:center;">1-18</div><div class="gc" style="left:182px;top:494px;width:57px;height:16px;background:#33CCFF;color:#000;text-align:center;letter-spacing:0.8px;">1дюжи<span style="letter-spacing:-0.6px">...</span></div><div class="gc" style="left:240px;top:494px;width:76px;height:16px;background:#00FF00;color:#000;text-align:center;letter-spacing:0.8px;">2колонка</div><div class="gc" style="left:317px;top:494px;width:76px;height:16px;background:#FF6666;color:#000;text-align:center;letter-spacing:0.8px;">2сиклайн</div><div class="gc" style="left:394px;top:494px;width:77px;height:16px;background:#33CCFF;color:#000;text-align:left;padding-left:3px;">Tiers</div><div class="gc" style="left:0px;top:511px;width:28px;height:16px;background:#C0DCC0;color:#000;text-align:center;">15</div><div class="gc" style="left:29px;top:511px;width:24px;height:16px;background:#FBFB92;color:#000;text-align:center;">8</div><div class="gc" style="left:54px;top:511px;width:41px;height:16px;background:#000000;color:#FFFF00;text-align:center;letter-spacing:0.8px;">черн</div><div class="gc" style="left:96px;top:511px;width:28px;height:16px;background:#FBFB92;color:#000;text-align:center;letter-spacing:0.8px;">чет</div><div class="gc" style="left:125px;top:511px;width:56px;height:16px;background:#9CFFCC;color:#000;text-align:center;">1-18</div><div class="gc" style="left:182px;top:511px;width:57px;height:16px;background:#33CCFF;color:#000;text-align:center;letter-spacing:0.8px;">1дюжи<span style="letter-spacing:-0.6px">...</span></div><div class="gc" style="left:240px;top:511px;width:76px;height:16px;background:#00FF00;color:#000;text-align:center;letter-spacing:0.8px;">2колонка</div><div class="gc" style="left:317px;top:511px;width:76px;height:16px;background:#FF6666;color:#000;text-align:center;letter-spacing:0.8px;">2сиклайн</div><div class="gc" style="left:394px;top:511px;width:77px;height:16px;background:#33CCFF;color:#000;text-align:left;padding-left:3px;">Tiers</div><div class="gc" style="left:0px;top:528px;width:28px;height:16px;background:#C0DCC0;color:#000;text-align:center;">14</div><div class="gc" style="left:29px;top:528px;width:24px;height:16px;background:#FBFB92;color:#000;text-align:center;">13</div><div class="gc" style="left:54px;top:528px;width:41px;height:16px;background:#000000;color:#FFFF00;text-align:center;letter-spacing:0.8px;">черн</div><div class="gc" style="left:96px;top:528px;width:28px;height:16px;background:#66FF33;color:#000;text-align:center;letter-spacing:0.8px;">неч</div><div class="gc" style="left:125px;top:528px;width:56px;height:16px;background:#9CFFCC;color:#000;text-align:center;">1-18</div><div class="gc" style="left:182px;top:528px;width:57px;height:16px;background:#FBFB92;color:#000;text-align:center;letter-spacing:0.8px;">2дюжи<span style="letter-spacing:-0.6px">...</span></div><div class="gc" style="left:240px;top:528px;width:76px;height:16px;background:#FF00FF;color:#000;text-align:center;letter-spacing:0.8px;">1колонка</div><div class="gc" style="left:317px;top:528px;width:76px;height:16px;background:#FF5CFF;color:#000;text-align:center;letter-spacing:0.8px;">3сиклайн</div><div class="gc" style="left:394px;top:528px;width:77px;height:16px;background:#33CCFF;color:#000;text-align:left;padding-left:3px;">Tiers</div></div><div style="left:480px;top:145px;width:2px;height:534px;background:#FCFCF8"></div><div style="left:495px;top:145px;width:2px;height:534px;background:#FCFCF8"></div><div class="sbb" style="left:482px;top:147px;width:13px;height:15px"></div><svg style="position:absolute;left:482px;top:147px" width="13" height="15" viewBox="0 0 13 15"><path d="M3 9 L6.5 5.5 L10 9" stroke="#4D6185" stroke-width="2" fill="none"/></svg><div class="sbb" style="left:482px;top:663px;width:13px;height:14px"></div><svg style="position:absolute;left:482px;top:663px" width="13" height="14" viewBox="0 0 13 14"><path d="M3 5 L6.5 8.5 L10 5" stroke="#4D6185" stroke-width="2" fill="none"/></svg><div class="sbb" style="left:482px;top:164px;width:13px;height:345px"></div><div style="left:485px;top:333px;width:7px;height:1px;background:#F4F8FF"></div><div style="left:486px;top:334px;width:7px;height:1px;background:#8CB0F0"></div><div style="left:485px;top:335px;width:7px;height:1px;background:#F4F8FF"></div><div style="left:486px;top:336px;width:7px;height:1px;background:#8CB0F0"></div><div style="left:485px;top:337px;width:7px;height:1px;background:#F4F8FF"></div><div style="left:486px;top:338px;width:7px;height:1px;background:#8CB0F0"></div><div style="left:485px;top:339px;width:7px;height:1px;background:#F4F8FF"></div><div style="left:486px;top:340px;width:7px;height:1px;background:#8CB0F0"></div><div style="left:7px;top:720px;width:33px;height:33px;background:#085F10"></div><svg style="position:absolute;left:7px;top:720px" width="33" height="33" viewBox="0 0 33 33"><ellipse cx="16.5" cy="16.5" rx="14.6" ry="11.6" fill="none" stroke="#8CE88C" stroke-width="1" stroke-dasharray="1.5 1.5"/><ellipse cx="16.5" cy="16.5" rx="2.9" ry="6.6" fill="none" stroke="#F0FFF0" stroke-width="1.7"/></svg><div style="left:42px;top:685px;width:33px;height:33px;background:radial-gradient(circle at 60% 40%,#36A450 0%,#22963E 60%,#12802C 100%)"></div><div style="left:46.5px;top:691.5px;width:22px;height:20px;border-radius:50%;background:#FF1010"></div><div class="t num" style="left:42.5px;width:30px;top:696.0px;font-size:11px;line-height:13px;letter-spacing:0.6px">3</div><div style="left:77px;top:685px;width:33px;height:33px;background:#085F10"></div><div style="left:83.0px;top:692.0px;width:21px;height:19px;border-radius:50%;background:#000000"></div><div class="t num" style="left:78.5px;width:30px;top:696.0px;font-size:11px;line-height:13px;letter-spacing:0.6px">6</div><div style="left:112px;top:685px;width:33px;height:33px;background:#085F10"></div><div style="left:118.0px;top:692.0px;width:21px;height:19px;border-radius:50%;background:#D63424"></div><div class="t num" style="left:113.5px;width:30px;top:696.0px;font-size:11px;line-height:13px;letter-spacing:0.6px">9</div><div style="left:147px;top:685px;width:33px;height:33px;background:#085F10"></div><div style="left:153.0px;top:692.0px;width:21px;height:19px;border-radius:50%;background:#D63424"></div><div class="t num" style="left:148.5px;width:30px;top:696.0px;font-size:11px;line-height:13px;letter-spacing:0.6px">12</div><div style="left:182px;top:685px;width:33px;height:33px;background:#085F10"></div><div style="left:188.0px;top:692.0px;width:21px;height:19px;border-radius:50%;background:#000000"></div><div class="t num" style="left:183.5px;width:30px;top:696.0px;font-size:11px;line-height:13px;letter-spacing:0.6px">15</div><div style="left:217px;top:685px;width:33px;height:33px;background:#085F10"></div><div style="left:223.0px;top:692.0px;width:21px;height:19px;border-radius:50%;background:#D63424"></div><div class="t num" style="left:218.5px;width:30px;top:696.0px;font-size:11px;line-height:13px;letter-spacing:0.6px">18</div><div style="left:252px;top:685px;width:33px;height:33px;background:#085F10"></div><div style="left:258.0px;top:692.0px;width:21px;height:19px;border-radius:50%;background:#D63424"></div><div class="t num" style="left:253.5px;width:30px;top:696.0px;font-size:11px;line-height:13px;letter-spacing:0.6px">21</div><div style="left:287px;top:685px;width:33px;height:33px;background:#085F10"></div><div style="left:293.0px;top:692.0px;width:21px;height:19px;border-radius:50%;background:#000000"></div><div class="t num" style="left:288.5px;width:30px;top:696.0px;font-size:11px;line-height:13px;letter-spacing:0.6px">24</div><div style="left:322px;top:685px;width:33px;height:33px;background:#085F10"></div><div style="left:328.0px;top:692.0px;width:21px;height:19px;border-radius:50%;background:#D63424"></div><div class="t num" style="left:323.5px;width:30px;top:696.0px;font-size:11px;line-height:13px;letter-spacing:0.6px">27</div><div style="left:357px;top:685px;width:33px;height:33px;background:#085F10"></div><div style="left:363.0px;top:692.0px;width:21px;height:19px;border-radius:50%;background:#D63424"></div><div class="t num" style="left:358.5px;width:30px;top:696.0px;font-size:11px;line-height:13px;letter-spacing:0.6px">30</div><div style="left:392px;top:685px;width:33px;height:33px;background:#085F10"></div><div style="left:398.0px;top:692.0px;width:21px;height:19px;border-radius:50%;background:#000000"></div><div class="t num" style="left:393.5px;width:30px;top:696.0px;font-size:11px;line-height:13px;letter-spacing:0.6px">33</div><div style="left:427px;top:685px;width:33px;height:33px;background:#085F10"></div><div style="left:433.0px;top:692.0px;width:21px;height:19px;border-radius:50%;background:#D63424"></div><div class="t num" style="left:428.5px;width:30px;top:696.0px;font-size:11px;line-height:13px;letter-spacing:0.6px">36</div><div style="left:42px;top:720px;width:33px;height:33px;background:#085F10"></div><div style="left:48.0px;top:727.0px;width:21px;height:19px;border-radius:50%;background:#000000"></div><div class="t num" style="left:43.5px;width:30px;top:731.0px;font-size:11px;line-height:13px;letter-spacing:0.6px">2</div><div style="left:77px;top:720px;width:33px;height:33px;background:#085F10"></div><div style="left:83.0px;top:727.0px;width:21px;height:19px;border-radius:50%;background:#D63424"></div><div class="t num" style="left:78.5px;width:30px;top:731.0px;font-size:11px;line-height:13px;letter-spacing:0.6px">5</div><div style="left:112px;top:720px;width:33px;height:33px;background:#085F10"></div><div style="left:118.0px;top:727.0px;width:21px;height:19px;border-radius:50%;background:#000000"></div><div class="t num" style="left:113.5px;width:30px;top:731.0px;font-size:11px;line-height:13px;letter-spacing:0.6px">8</div><div style="left:147px;top:720px;width:33px;height:33px;background:#085F10"></div><div style="left:153.0px;top:727.0px;width:21px;height:19px;border-radius:50%;background:#000000"></div><div class="t num" style="left:148.5px;width:30px;top:731.0px;font-size:11px;line-height:13px;letter-spacing:0.6px">11</div><div style="left:182px;top:720px;width:33px;height:33px;background:#085F10"></div><div style="left:188.0px;top:727.0px;width:21px;height:19px;border-radius:50%;background:#D63424"></div><div class="t num" style="left:183.5px;width:30px;top:731.0px;font-size:11px;line-height:13px;letter-spacing:0.6px">14</div><div style="left:217px;top:720px;width:33px;height:33px;background:#085F10"></div><div style="left:223.0px;top:727.0px;width:21px;height:19px;border-radius:50%;background:#000000"></div><div class="t num" style="left:218.5px;width:30px;top:731.0px;font-size:11px;line-height:13px;letter-spacing:0.6px">17</div><div style="left:252px;top:720px;width:33px;height:33px;background:#085F10"></div><div style="left:258.0px;top:727.0px;width:21px;height:19px;border-radius:50%;background:#000000"></div><div class="t num" style="left:253.5px;width:30px;top:731.0px;font-size:11px;line-height:13px;letter-spacing:0.6px">20</div><div style="left:287px;top:720px;width:33px;height:33px;background:#085F10"></div><div style="left:293.0px;top:727.0px;width:21px;height:19px;border-radius:50%;background:#D63424"></div><div class="t num" style="left:288.5px;width:30px;top:731.0px;font-size:11px;line-height:13px;letter-spacing:0.6px">23</div><div style="left:322px;top:720px;width:33px;height:33px;background:#085F10"></div><div style="left:328.0px;top:727.0px;width:21px;height:19px;border-radius:50%;background:#000000"></div><div class="t num" style="left:323.5px;width:30px;top:731.0px;font-size:11px;line-height:13px;letter-spacing:0.6px">26</div><div style="left:357px;top:720px;width:33px;height:33px;background:#085F10"></div><div style="left:363.0px;top:727.0px;width:21px;height:19px;border-radius:50%;background:#000000"></div><div class="t num" style="left:358.5px;width:30px;top:731.0px;font-size:11px;line-height:13px;letter-spacing:0.6px">29</div><div style="left:392px;top:720px;width:33px;height:33px;background:#085F10"></div><div style="left:398.0px;top:727.0px;width:21px;height:19px;border-radius:50%;background:#D63424"></div><div class="t num" style="left:393.5px;width:30px;top:731.0px;font-size:11px;line-height:13px;letter-spacing:0.6px">32</div><div style="left:427px;top:720px;width:33px;height:33px;background:#085F10"></div><div style="left:433.0px;top:727.0px;width:21px;height:19px;border-radius:50%;background:#000000"></div><div class="t num" style="left:428.5px;width:30px;top:731.0px;font-size:11px;line-height:13px;letter-spacing:0.6px">35</div><div style="left:42px;top:755px;width:33px;height:33px;background:#085F10"></div><div style="left:48.0px;top:762.0px;width:21px;height:19px;border-radius:50%;background:#D63424"></div><div class="t num" style="left:43.5px;width:30px;top:766.0px;font-size:11px;line-height:13px;letter-spacing:0.6px">1</div><div style="left:77px;top:755px;width:33px;height:33px;background:#085F10"></div><div style="left:83.0px;top:762.0px;width:21px;height:19px;border-radius:50%;background:#000000"></div><div class="t num" style="left:78.5px;width:30px;top:766.0px;font-size:11px;line-height:13px;letter-spacing:0.6px">4</div><div style="left:112px;top:755px;width:33px;height:33px;background:#085F10"></div><div style="left:118.0px;top:762.0px;width:21px;height:19px;border-radius:50%;background:#D63424"></div><div class="t num" style="left:113.5px;width:30px;top:766.0px;font-size:11px;line-height:13px;letter-spacing:0.6px">7</div><div style="left:147px;top:755px;width:33px;height:33px;background:#085F10"></div><div style="left:153.0px;top:762.0px;width:21px;height:19px;border-radius:50%;background:#000000"></div><div class="t num" style="left:148.5px;width:30px;top:766.0px;font-size:11px;line-height:13px;letter-spacing:0.6px">10</div><div style="left:182px;top:755px;width:33px;height:33px;background:#085F10"></div><div style="left:188.0px;top:762.0px;width:21px;height:19px;border-radius:50%;background:#000000"></div><div class="t num" style="left:183.5px;width:30px;top:766.0px;font-size:11px;line-height:13px;letter-spacing:0.6px">13</div><div style="left:217px;top:755px;width:33px;height:33px;background:#085F10"></div><div style="left:223.0px;top:762.0px;width:21px;height:19px;border-radius:50%;background:#D63424"></div><div class="t num" style="left:218.5px;width:30px;top:766.0px;font-size:11px;line-height:13px;letter-spacing:0.6px">16</div><div style="left:252px;top:755px;width:33px;height:33px;background:#085F10"></div><div style="left:258.0px;top:762.0px;width:21px;height:19px;border-radius:50%;background:#D63424"></div><div class="t num" style="left:253.5px;width:30px;top:766.0px;font-size:11px;line-height:13px;letter-spacing:0.6px">19</div><div style="left:287px;top:755px;width:33px;height:33px;background:#085F10"></div><div style="left:293.0px;top:762.0px;width:21px;height:19px;border-radius:50%;background:#000000"></div><div class="t num" style="left:288.5px;width:30px;top:766.0px;font-size:11px;line-height:13px;letter-spacing:0.6px">22</div><div style="left:322px;top:755px;width:33px;height:33px;background:#085F10"></div><div style="left:328.0px;top:762.0px;width:21px;height:19px;border-radius:50%;background:#D63424"></div><div class="t num" style="left:323.5px;width:30px;top:766.0px;font-size:11px;line-height:13px;letter-spacing:0.6px">25</div><div style="left:357px;top:755px;width:33px;height:33px;background:#085F10"></div><div style="left:363.0px;top:762.0px;width:21px;height:19px;border-radius:50%;background:#000000"></div><div class="t num" style="left:358.5px;width:30px;top:766.0px;font-size:11px;line-height:13px;letter-spacing:0.6px">28</div><div style="left:392px;top:755px;width:33px;height:33px;background:#085F10"></div><div style="left:398.0px;top:762.0px;width:21px;height:19px;border-radius:50%;background:#000000"></div><div class="t num" style="left:393.5px;width:30px;top:766.0px;font-size:11px;line-height:13px;letter-spacing:0.6px">31</div><div style="left:427px;top:755px;width:33px;height:33px;background:#085F10"></div><div style="left:433.0px;top:762.0px;width:21px;height:19px;border-radius:50%;background:#D63424"></div><div class="t num" style="left:428.5px;width:30px;top:766.0px;font-size:11px;line-height:13px;letter-spacing:0.6px">34</div><div class="t" style="left:6px;top:808.69px;font-size:11px;line-height:11px;color:#000;font-weight:normal;">В последнем спине выпало: 1 красное</div><div style="left:701px;top:800px;width:1px;height:25px;background:#D0CDB8"></div><div style="left:702px;top:800px;width:1px;height:25px;background:#fff"></div><div style="left:821px;top:800px;width:1px;height:25px;background:#D0CDB8"></div><div style="left:822px;top:800px;width:1px;height:25px;background:#fff"></div><div class="t" style="left:708px;top:808.69px;font-size:11px;line-height:11px;color:#000;font-weight:normal;">Автосмещение : 31</div><div class="t" style="left:827px;top:808.69px;font-size:11px;line-height:11px;color:#000;font-weight:normal;">Исходное: 8</div><div style="left:1013px;top:815px;width:2px;height:2px;background:#C8C5B2"></div><div style="left:1009px;top:819px;width:2px;height:2px;background:#C8C5B2"></div><div style="left:1013px;top:819px;width:2px;height:2px;background:#C8C5B2"></div><div style="left:1005px;top:823px;width:2px;height:2px;background:#C8C5B2"></div><div style="left:1009px;top:823px;width:2px;height:2px;background:#C8C5B2"></div><div style="left:1013px;top:823px;width:2px;height:2px;background:#C8C5B2"></div><div style="left:501px;top:30px;width:516px;height:769px;background:#ECE9D8"></div><div style="left:501px;top:30px;width:2px;height:769px;background:#fff"></div><div style="left:501px;top:30px;width:516px;height:2px;background:#fff"></div><div style="left:1015px;top:30px;width:2px;height:769px;background:linear-gradient(90deg,#ACA899,#C8C5B5)"></div><div style="left:503px;top:134px;width:512px;height:1px;background:#ACA899"></div><div style="left:503px;top:141px;width:512px;height:1px;background:#fff"></div><div class="t" style="left:506px;top:33.69px;font-size:11px;line-height:11px;color:#000;font-weight:normal;letter-spacing:-0.12px">Ряд Фибоначчи=1 1 2 3 5 8 13 21 34 55 89 144 233 377 610</div><div class="t" style="left:506px;top:49.69px;font-size:11px;line-height:11px;color:#000;font-weight:normal;letter-spacing:-0.12px">Ряд Tiers = 5 8 10 11 13 16 23 24 27 30 33 36</div><div class="t" style="left:506px;top:65.69px;font-size:11px;line-height:11px;color:#000;font-weight:normal;letter-spacing:-0.12px">Ряд VdZ = 0 2 3 4 7 12 15 18 19 21 22 25 26 28 29 32 35</div><div style="left:822px;top:32px;width:192px;height:16px;overflow:hidden"><div class="t" style="left:0px;top:1.69px;font-size:11px;line-height:11px;color:#000;font-weight:normal;letter-spacing:-0.12px">Ряд Мартингейл=1 2 4 8 16 32 64 128 256 512</div></div><div class="t" style="left:822px;top:49.69px;font-size:11px;line-height:11px;color:#000;font-weight:normal;letter-spacing:-0.12px">Ряд Orph = 1 6 9 14 17 20 31 34</div><div class="t" style="left:822px;top:65.69px;font-size:11px;line-height:11px;color:#000;font-weight:normal;letter-spacing:-0.12px">Ряд VdZ_zch = 0 3 12 15 26 32 35</div><div class="t" style="left:507px;top:83.96px;font-size:16px;line-height:16px;color:#000;font-weight:bold;letter-spacing:0.55px">Сумма на счете = 0</div><div style="left:505px;top:103px;width:171px;height:21px;background:#fff;border:1px solid #7F9DB9"></div><div class="t" style="left:509px;top:107.69px;font-size:11px;line-height:11px;color:#000;font-weight:normal;">Автоставки</div><div class="cbb" style="left:659px;top:106px;width:15px;height:15px"></div><svg style="position:absolute;left:659px;top:106px" width="15" height="15" viewBox="0 0 15 15"><path d="M4 6 L7.5 9.5 L11 6" stroke="#4D6185" stroke-width="2" fill="none"/></svg><div style="left:686px;top:81px;width:249px;height:41px;border:1px solid #D0D0BF;border-right-color:#fff;border-bottom-color:#fff;box-shadow:inset -1px -1px 0 #D0D0BF, inset 1px 1px 0 #fff"></div><div class="btn" style="left:691px;top:88px;width:87px;height:25px;"></div><div class="t" style="left:696px;top:95.69px;font-size:11px;line-height:11px;color:#000;font-weight:normal;">Автоспин старт</div><div class="t" style="left:783px;top:88.69px;font-size:11px;line-height:11px;color:#000;font-weight:normal;">Временная</div><div class="t" style="left:783px;top:101.69px;font-size:11px;line-height:11px;color:#000;font-weight:normal;">задержка, мс</div><div style="left:854px;top:87px;width:73px;height:31px;background:#C0DCC0;border:1px solid #7F9DB9"></div><div class="t" style="left:858px;top:93.76px;font-size:18px;line-height:18px;color:#000;font-weight:normal;">0</div><div style="left:907px;top:90px;width:17px;height:26px;background:#F8F8F4"></div><div class="btn" style="left:907px;top:90px;width:17px;height:12px;border-radius:2px;border-width:1px 1.5px"></div><div class="btn" style="left:907px;top:104px;width:17px;height:12px;border-radius:2px;border-width:1px 1.5px"></div><svg style="position:absolute;left:907px;top:90px" width="17" height="12" viewBox="0 0 17 12"><path d="M4.7 9.6 L8.5 5.6 L12.3 9.6 Z" fill="#000"/></svg><svg style="position:absolute;left:907px;top:104px" width="17" height="12" viewBox="0 0 17 12"><path d="M4.7 4.6 L12.3 4.6 L8.5 8.8 Z" fill="#000"/></svg><div style="left:906px;top:89px;width:1px;height:28px;background:#E02020"></div><div style="left:924px;top:89px;width:1px;height:8px;background:#E02020"></div><div style="left:907px;top:89px;width:17px;height:1px;background:#E02020"></div><div style="left:906px;top:102px;width:19px;height:1px;background:#E02020"></div><div style="left:503px;top:162px;width:510px;height:472px;border:1px solid #919B9C;background:#FCFCFE"></div><div style="left:505px;top:144px;width:71px;height:19px;border:1px solid #919B9C;border-bottom:none;border-radius:3px 3px 0 0;background:linear-gradient(180deg,#FFFFFF,#F3F3EF 60%,#E5E4DB)"></div><div class="t" style="left:511px;top:148.69px;font-size:11px;line-height:11px;color:#000;font-weight:normal;">Анализатор</div><div style="left:649px;top:144px;width:109px;height:19px;border:1px solid #919B9C;border-bottom:none;border-radius:3px 3px 0 0;background:linear-gradient(180deg,#FFFFFF,#F3F3EF 60%,#E5E4DB)"></div><div class="t" style="left:654px;top:148.69px;font-size:11px;line-height:11px;color:#000;font-weight:normal;">Частоты по числам</div><div style="left:759px;top:144px;width:130px;height:19px;border:1px solid #919B9C;border-bottom:none;border-radius:3px 3px 0 0;background:linear-gradient(180deg,#FFFFFF,#F3F3EF 60%,#E5E4DB)"></div><div class="t" style="left:766px;top:148.69px;font-size:11px;line-height:11px;color:#000;font-weight:normal;">Функционал PsevdoMS</div><div style="left:890px;top:140px;width:92px;height:24px;overflow:hidden"><div style="left:0px;top:4px;width:140px;height:19px;border:1px solid #919B9C;border-bottom:none;border-radius:3px 3px 0 0;background:linear-gradient(180deg,#FFFFFF,#F3F3EF 60%,#E5E4DB)"></div><div class="t" style="left:6px;top:8.69px;font-size:11px;line-height:11px;color:#000;font-weight:normal;">Контроль банкролла</div></div><div style="left:576px;top:142px;width:73px;height:21px;border:1px solid #919B9C;border-bottom:none;border-radius:3px 3px 0 0;background:#FCFCFE;box-shadow:inset 0 2px 0 #FFC83C"></div><div style="left:576px;top:142px;width:73px;height:1px;background:#E68B2C;border-radius:3px 3px 0 0"></div><div class="t" style="left:583px;top:146.69px;font-size:11px;line-height:11px;color:#000;font-weight:normal;">Автоставки</div><div style="left:982px;top:144px;width:32px;height:15px;border:1px solid #B4C8F6;border-radius:2px;background:linear-gradient(180deg,#DCE6FD,#C1D3FB 60%,#B4C8F6)"></div><div style="left:998px;top:145px;width:1px;height:13px;background:#D8E2FC"></div><svg style="position:absolute;left:982px;top:144px" width="32" height="15" viewBox="0 0 32 15"><path d="M10 4 L6.5 7.5 L10 11 Z M22 4 L25.5 7.5 L22 11 Z" fill="#4D6185" stroke="#4D6185" stroke-width="1"/></svg><div style="left:508px;top:187px;width:474px;height:442px;border:1px solid #919B9C;border-right:none;background:#FCFCFE"></div><div style="left:1010px;top:166px;width:1px;height:466px;background:#B8B2A0"></div><div style="left:508px;top:631px;width:503px;height:1px;background:#B8B2A0"></div><div style="left:511px;top:169px;width:83px;height:19px;border:1px solid #919B9C;border-bottom:none;border-radius:3px 3px 0 0;background:linear-gradient(180deg,#FFFFFF,#F3F3EF 60%,#E5E4DB)"></div><div class="t" style="left:516px;top:173.69px;font-size:11px;line-height:11px;color:#000;font-weight:normal;">Общие ставки</div><div style="left:595px;top:169px;width:186px;height:19px;border:1px solid #919B9C;border-bottom:none;border-radius:3px 3px 0 0;background:linear-gradient(180deg,#FFFFFF,#F3F3EF 60%,#E5E4DB)"></div><div class="t" style="left:601px;top:173.69px;font-size:11px;line-height:11px;color:#000;font-weight:normal;">Наборы пользовательских ставок</div><div style="left:876px;top:165px;width:105px;height:23px;overflow:hidden"><div style="left:0px;top:4px;width:125px;height:19px;border:1px solid #919B9C;border-bottom:none;border-radius:3px 3px 0 0;background:linear-gradient(180deg,#FFFFFF,#F3F3EF 60%,#E5E4DB)"></div><div class="t" style="left:5px;top:8.69px;font-size:11px;line-height:11px;color:#000;font-weight:normal;">Исходные строки MD5</div></div><div style="left:781px;top:167px;width:95px;height:21px;border:1px solid #919B9C;border-bottom:none;border-radius:3px 3px 0 0;background:#FCFCFE;box-shadow:inset 0 2px 0 #FFC83C"></div><div style="left:781px;top:167px;width:95px;height:1px;background:#E68B2C;border-radius:3px 3px 0 0"></div><div class="t" style="left:789px;top:171.69px;font-size:11px;line-height:11px;color:#000;font-weight:normal;">Дополнительно</div><div style="left:513px;top:192px;width:492px;height:434px;border:1px solid #7F9DB9;background:#ECE9D8;box-shadow:inset 1px 1px 0 #fff, inset -1px -1px 0 #fff"></div><div style="left:515px;top:609px;width:488px;height:1px;background:#ACA899"></div><div style="left:1002px;top:194px;width:1px;height:415px;background:#ACA899"></div><div style="left:515px;top:194px;width:424px;height:110px;background:#B0CCF6"></div><div style="left:518px;top:198px;width:33px;height:33px;background:#085F10"></div><div style="left:524.0px;top:205.0px;width:21px;height:19px;border-radius:50%;background:#D63424"></div><div class="t num" style="left:519.5px;width:30px;top:209.0px;font-size:11px;line-height:13px;letter-spacing:0.6px">3</div><div style="left:553px;top:198px;width:33px;height:33px;background:#085F10"></div><div style="left:559.0px;top:205.0px;width:21px;height:19px;border-radius:50%;background:#000"></div><div class="t num" style="left:554.5px;width:30px;top:209.0px;font-size:11px;line-height:13px;letter-spacing:0.6px">6</div><div style="left:588px;top:198px;width:33px;height:33px;background:#085F10"></div><div style="left:594.0px;top:205.0px;width:21px;height:19px;border-radius:50%;background:#D63424"></div><div class="t num" style="left:589.5px;width:30px;top:209.0px;font-size:11px;line-height:13px;letter-spacing:0.6px">9</div><div style="left:623px;top:198px;width:33px;height:33px;background:#085F10"></div><div style="left:629.0px;top:205.0px;width:21px;height:19px;border-radius:50%;background:#D63424"></div><div class="t num" style="left:624.5px;width:30px;top:209.0px;font-size:11px;line-height:13px;letter-spacing:0.6px">12</div><div style="left:658px;top:198px;width:33px;height:33px;background:#085F10"></div><div style="left:664.0px;top:205.0px;width:21px;height:19px;border-radius:50%;background:#000"></div><div class="t num" style="left:659.5px;width:30px;top:209.0px;font-size:11px;line-height:13px;letter-spacing:0.6px">15</div><div style="left:693px;top:198px;width:33px;height:33px;background:#085F10"></div><div style="left:699.0px;top:205.0px;width:21px;height:19px;border-radius:50%;background:#D63424"></div><div class="t num" style="left:694.5px;width:30px;top:209.0px;font-size:11px;line-height:13px;letter-spacing:0.6px">18</div><div style="left:728px;top:198px;width:33px;height:33px;background:#085F10"></div><div style="left:734.0px;top:205.0px;width:21px;height:19px;border-radius:50%;background:#D63424"></div><div class="t num" style="left:729.5px;width:30px;top:209.0px;font-size:11px;line-height:13px;letter-spacing:0.6px">21</div><div style="left:763px;top:198px;width:33px;height:33px;background:#085F10"></div><div style="left:769.0px;top:205.0px;width:21px;height:19px;border-radius:50%;background:#000"></div><div class="t num" style="left:764.5px;width:30px;top:209.0px;font-size:11px;line-height:13px;letter-spacing:0.6px">24</div><div style="left:798px;top:198px;width:33px;height:33px;background:#085F10"></div><div style="left:804.0px;top:205.0px;width:21px;height:19px;border-radius:50%;background:#D63424"></div><div class="t num" style="left:799.5px;width:30px;top:209.0px;font-size:11px;line-height:13px;letter-spacing:0.6px">27</div><div style="left:833px;top:198px;width:33px;height:33px;background:#085F10"></div><div style="left:839.0px;top:205.0px;width:21px;height:19px;border-radius:50%;background:#D63424"></div><div class="t num" style="left:834.5px;width:30px;top:209.0px;font-size:11px;line-height:13px;letter-spacing:0.6px">30</div><div style="left:868px;top:198px;width:33px;height:33px;background:#085F10"></div><div style="left:874.0px;top:205.0px;width:21px;height:19px;border-radius:50%;background:#000"></div><div class="t num" style="left:869.5px;width:30px;top:209.0px;font-size:11px;line-height:13px;letter-spacing:0.6px">33</div><div style="left:903px;top:198px;width:33px;height:33px;background:#085F10"></div><div style="left:909.0px;top:205.0px;width:21px;height:19px;border-radius:50%;background:#D63424"></div><div class="t num" style="left:904.5px;width:30px;top:209.0px;font-size:11px;line-height:13px;letter-spacing:0.6px">36</div><div style="left:518px;top:233px;width:33px;height:33px;background:#085F10"></div><div style="left:524.0px;top:240.0px;width:21px;height:19px;border-radius:50%;background:#000"></div><div class="t num" style="left:519.5px;width:30px;top:244.0px;font-size:11px;line-height:13px;letter-spacing:0.6px">2</div><div style="left:553px;top:233px;width:33px;height:33px;background:#085F10"></div><div style="left:559.0px;top:240.0px;width:21px;height:19px;border-radius:50%;background:#D63424"></div><div class="t num" style="left:554.5px;width:30px;top:244.0px;font-size:11px;line-height:13px;letter-spacing:0.6px">5</div><div style="left:588px;top:233px;width:33px;height:33px;background:#085F10"></div><div style="left:594.0px;top:240.0px;width:21px;height:19px;border-radius:50%;background:#000"></div><div class="t num" style="left:589.5px;width:30px;top:244.0px;font-size:11px;line-height:13px;letter-spacing:0.6px">8</div><div style="left:623px;top:233px;width:33px;height:33px;background:#085F10"></div><div style="left:629.0px;top:240.0px;width:21px;height:19px;border-radius:50%;background:#000"></div><div class="t num" style="left:624.5px;width:30px;top:244.0px;font-size:11px;line-height:13px;letter-spacing:0.6px">11</div><div style="left:658px;top:233px;width:33px;height:33px;background:#085F10"></div><div style="left:664.0px;top:240.0px;width:21px;height:19px;border-radius:50%;background:#D63424"></div><div class="t num" style="left:659.5px;width:30px;top:244.0px;font-size:11px;line-height:13px;letter-spacing:0.6px">14</div><div style="left:693px;top:233px;width:33px;height:33px;background:#085F10"></div><div style="left:699.0px;top:240.0px;width:21px;height:19px;border-radius:50%;background:#000"></div><div class="t num" style="left:694.5px;width:30px;top:244.0px;font-size:11px;line-height:13px;letter-spacing:0.6px">17</div><div style="left:728px;top:233px;width:33px;height:33px;background:#085F10"></div><div style="left:734.0px;top:240.0px;width:21px;height:19px;border-radius:50%;background:#000"></div><div class="t num" style="left:729.5px;width:30px;top:244.0px;font-size:11px;line-height:13px;letter-spacing:0.6px">20</div><div style="left:763px;top:233px;width:33px;height:33px;background:#085F10"></div><div style="left:769.0px;top:240.0px;width:21px;height:19px;border-radius:50%;background:#D63424"></div><div class="t num" style="left:764.5px;width:30px;top:244.0px;font-size:11px;line-height:13px;letter-spacing:0.6px">23</div><div style="left:798px;top:233px;width:33px;height:33px;background:#085F10"></div><div style="left:804.0px;top:240.0px;width:21px;height:19px;border-radius:50%;background:#000"></div><div class="t num" style="left:799.5px;width:30px;top:244.0px;font-size:11px;line-height:13px;letter-spacing:0.6px">26</div><div style="left:833px;top:233px;width:33px;height:33px;background:#085F10"></div><div style="left:839.0px;top:240.0px;width:21px;height:19px;border-radius:50%;background:#000"></div><div class="t num" style="left:834.5px;width:30px;top:244.0px;font-size:11px;line-height:13px;letter-spacing:0.6px">29</div><div style="left:868px;top:233px;width:33px;height:33px;background:#085F10"></div><div style="left:874.0px;top:240.0px;width:21px;height:19px;border-radius:50%;background:#D63424"></div><div class="t num" style="left:869.5px;width:30px;top:244.0px;font-size:11px;line-height:13px;letter-spacing:0.6px">32</div><div style="left:903px;top:233px;width:33px;height:33px;background:#085F10"></div><div style="left:909.0px;top:240.0px;width:21px;height:19px;border-radius:50%;background:#000"></div><div class="t num" style="left:904.5px;width:30px;top:244.0px;font-size:11px;line-height:13px;letter-spacing:0.6px">35</div><div style="left:518px;top:268px;width:33px;height:33px;background:#085F10"></div><div style="left:524.0px;top:275.0px;width:21px;height:19px;border-radius:50%;background:#D63424"></div><div class="t num" style="left:519.5px;width:30px;top:279.0px;font-size:11px;line-height:13px;letter-spacing:0.6px">1</div><div style="left:553px;top:268px;width:33px;height:33px;background:#085F10"></div><div style="left:559.0px;top:275.0px;width:21px;height:19px;border-radius:50%;background:#000"></div><div class="t num" style="left:554.5px;width:30px;top:279.0px;font-size:11px;line-height:13px;letter-spacing:0.6px">4</div><div style="left:588px;top:268px;width:33px;height:33px;background:#085F10"></div><div style="left:594.0px;top:275.0px;width:21px;height:19px;border-radius:50%;background:#D63424"></div><div class="t num" style="left:589.5px;width:30px;top:279.0px;font-size:11px;line-height:13px;letter-spacing:0.6px">7</div><div style="left:623px;top:268px;width:33px;height:33px;background:#085F10"></div><div style="left:629.0px;top:275.0px;width:21px;height:19px;border-radius:50%;background:#000"></div><div class="t num" style="left:624.5px;width:30px;top:279.0px;font-size:11px;line-height:13px;letter-spacing:0.6px">10</div><div style="left:658px;top:268px;width:33px;height:33px;background:#085F10"></div><div style="left:664.0px;top:275.0px;width:21px;height:19px;border-radius:50%;background:#000"></div><div class="t num" style="left:659.5px;width:30px;top:279.0px;font-size:11px;line-height:13px;letter-spacing:0.6px">13</div><div style="left:693px;top:268px;width:33px;height:33px;background:#085F10"></div><div style="left:699.0px;top:275.0px;width:21px;height:19px;border-radius:50%;background:#D63424"></div><div class="t num" style="left:694.5px;width:30px;top:279.0px;font-size:11px;line-height:13px;letter-spacing:0.6px">16</div><div style="left:728px;top:268px;width:33px;height:33px;background:#085F10"></div><div style="left:734.0px;top:275.0px;width:21px;height:19px;border-radius:50%;background:#D63424"></div><div class="t num" style="left:729.5px;width:30px;top:279.0px;font-size:11px;line-height:13px;letter-spacing:0.6px">19</div><div style="left:763px;top:268px;width:33px;height:33px;background:#085F10"></div><div style="left:769.0px;top:275.0px;width:21px;height:19px;border-radius:50%;background:#000"></div><div class="t num" style="left:764.5px;width:30px;top:279.0px;font-size:11px;line-height:13px;letter-spacing:0.6px">22</div><div style="left:798px;top:268px;width:33px;height:33px;background:#085F10"></div><div style="left:804.0px;top:275.0px;width:21px;height:19px;border-radius:50%;background:#D63424"></div><div class="t num" style="left:799.5px;width:30px;top:279.0px;font-size:11px;line-height:13px;letter-spacing:0.6px">25</div><div style="left:833px;top:268px;width:33px;height:33px;background:#085F10"></div><div style="left:839.0px;top:275.0px;width:21px;height:19px;border-radius:50%;background:#000"></div><div class="t num" style="left:834.5px;width:30px;top:279.0px;font-size:11px;line-height:13px;letter-spacing:0.6px">28</div><div style="left:868px;top:268px;width:33px;height:33px;background:#085F10"></div><div style="left:874.0px;top:275.0px;width:21px;height:19px;border-radius:50%;background:#000"></div><div class="t num" style="left:869.5px;width:30px;top:279.0px;font-size:11px;line-height:13px;letter-spacing:0.6px">31</div><div style="left:903px;top:268px;width:33px;height:33px;background:#085F10"></div><div style="left:909.0px;top:275.0px;width:21px;height:19px;border-radius:50%;background:#D63424"></div><div class="t num" style="left:904.5px;width:30px;top:279.0px;font-size:11px;line-height:13px;letter-spacing:0.6px">34</div><div style="left:543px;top:223px;width:20px;height:17px;background:#fff;border:1px solid #C8D8F0"></div><div class="chk" style="left:547px;top:225px;width:13px;height:13px;"></div><div style="left:544px;top:259px;width:20px;height:17px;background:#fff;border:1px solid #C8D8F0"></div><div class="chk" style="left:548px;top:261px;width:13px;height:13px;"><svg width="13" height="13" viewBox="0 0 13 13" style="position:absolute;left:-1px;top:-1px"><path d="M2.6 5.4 L5.3 8.3 L10 3.4" stroke="#21A121" stroke-width="2.3" fill="none"/></svg></div><div style="left:613px;top:223px;width:20px;height:17px;background:#fff;border:1px solid #C8D8F0"></div><div class="chk" style="left:617px;top:225px;width:13px;height:13px;"></div><div style="left:614px;top:259px;width:20px;height:17px;background:#fff;border:1px solid #C8D8F0"></div><div class="chk" style="left:618px;top:261px;width:13px;height:13px;"><svg width="13" height="13" viewBox="0 0 13 13" style="position:absolute;left:-1px;top:-1px"><path d="M2.6 5.4 L5.3 8.3 L10 3.4" stroke="#21A121" stroke-width="2.3" fill="none"/></svg></div><div style="left:683px;top:223px;width:20px;height:17px;background:#fff;border:1px solid #C8D8F0"></div><div class="chk" style="left:687px;top:225px;width:13px;height:13px;"></div><div style="left:684px;top:259px;width:20px;height:17px;background:#fff;border:1px solid #C8D8F0"></div><div class="chk" style="left:688px;top:261px;width:13px;height:13px;"><svg width="13" height="13" viewBox="0 0 13 13" style="position:absolute;left:-1px;top:-1px"><path d="M2.6 5.4 L5.3 8.3 L10 3.4" stroke="#21A121" stroke-width="2.3" fill="none"/></svg></div><div style="left:753px;top:223px;width:20px;height:17px;background:#fff;border:1px solid #C8D8F0"></div><div class="chk" style="left:757px;top:225px;width:13px;height:13px;"></div><div style="left:754px;top:259px;width:20px;height:17px;background:#fff;border:1px solid #C8D8F0"></div><div class="chk" style="left:758px;top:261px;width:13px;height:13px;"><svg width="13" height="13" viewBox="0 0 13 13" style="position:absolute;left:-1px;top:-1px"><path d="M2.6 5.4 L5.3 8.3 L10 3.4" stroke="#21A121" stroke-width="2.3" fill="none"/></svg></div><div style="left:823px;top:223px;width:20px;height:17px;background:#fff;border:1px solid #C8D8F0"></div><div class="chk" style="left:827px;top:225px;width:13px;height:13px;"></div><div style="left:824px;top:259px;width:20px;height:17px;background:#fff;border:1px solid #C8D8F0"></div><div class="chk" style="left:828px;top:261px;width:13px;height:13px;"><svg width="13" height="13" viewBox="0 0 13 13" style="position:absolute;left:-1px;top:-1px"><path d="M2.6 5.4 L5.3 8.3 L10 3.4" stroke="#21A121" stroke-width="2.3" fill="none"/></svg></div><div style="left:893px;top:223px;width:20px;height:17px;background:#fff;border:1px solid #C8D8F0"></div><div class="chk" style="left:897px;top:225px;width:13px;height:13px;"></div><div style="left:894px;top:259px;width:20px;height:17px;background:#fff;border:1px solid #C8D8F0"></div><div class="chk" style="left:898px;top:261px;width:13px;height:13px;"><svg width="13" height="13" viewBox="0 0 13 13" style="position:absolute;left:-1px;top:-1px"><path d="M2.6 5.4 L5.3 8.3 L10 3.4" stroke="#21A121" stroke-width="2.3" fill="none"/></svg></div><div style="left:515px;top:402px;width:424px;height:110px;background:#B0CCF6"></div><div style="left:515px;top:401px;width:424px;height:1px;background:#B8B098"></div><div style="left:518px;top:406px;width:33px;height:33px;background:#085F10"></div><div style="left:522.5px;top:413.0px;width:21px;height:19px;border-radius:50%;background:#D63424"></div><div class="t num" style="left:518px;width:30px;top:417.0px;font-size:11px;line-height:13px;letter-spacing:0.6px">3</div><div style="left:553px;top:406px;width:33px;height:33px;background:#085F10"></div><div style="left:560.5px;top:413.0px;width:21px;height:19px;border-radius:50%;background:#000"></div><div class="t num" style="left:556px;width:30px;top:417.0px;font-size:11px;line-height:13px;letter-spacing:0.6px">6</div><div style="left:588px;top:406px;width:33px;height:33px;background:#085F10"></div><div style="left:592.5px;top:413.0px;width:21px;height:19px;border-radius:50%;background:#D63424"></div><div class="t num" style="left:588px;width:30px;top:417.0px;font-size:11px;line-height:13px;letter-spacing:0.6px">9</div><div style="left:623px;top:406px;width:33px;height:33px;background:#085F10"></div><div style="left:630.5px;top:413.0px;width:21px;height:19px;border-radius:50%;background:#D63424"></div><div class="t num" style="left:626px;width:30px;top:417.0px;font-size:11px;line-height:13px;letter-spacing:0.6px">12</div><div style="left:658px;top:406px;width:33px;height:33px;background:#085F10"></div><div style="left:662.5px;top:413.0px;width:21px;height:19px;border-radius:50%;background:#000"></div><div class="t num" style="left:658px;width:30px;top:417.0px;font-size:11px;line-height:13px;letter-spacing:0.6px">15</div><div style="left:693px;top:406px;width:33px;height:33px;background:#085F10"></div><div style="left:700.5px;top:413.0px;width:21px;height:19px;border-radius:50%;background:#D63424"></div><div class="t num" style="left:696px;width:30px;top:417.0px;font-size:11px;line-height:13px;letter-spacing:0.6px">18</div><div style="left:728px;top:406px;width:33px;height:33px;background:#085F10"></div><div style="left:732.5px;top:413.0px;width:21px;height:19px;border-radius:50%;background:#D63424"></div><div class="t num" style="left:728px;width:30px;top:417.0px;font-size:11px;line-height:13px;letter-spacing:0.6px">21</div><div style="left:763px;top:406px;width:33px;height:33px;background:#085F10"></div><div style="left:770.5px;top:413.0px;width:21px;height:19px;border-radius:50%;background:#000"></div><div class="t num" style="left:766px;width:30px;top:417.0px;font-size:11px;line-height:13px;letter-spacing:0.6px">24</div><div style="left:798px;top:406px;width:33px;height:33px;background:#085F10"></div><div style="left:802.5px;top:413.0px;width:21px;height:19px;border-radius:50%;background:#D63424"></div><div class="t num" style="left:798px;width:30px;top:417.0px;font-size:11px;line-height:13px;letter-spacing:0.6px">27</div><div style="left:833px;top:406px;width:33px;height:33px;background:#085F10"></div><div style="left:840.5px;top:413.0px;width:21px;height:19px;border-radius:50%;background:#D63424"></div><div class="t num" style="left:836px;width:30px;top:417.0px;font-size:11px;line-height:13px;letter-spacing:0.6px">30</div><div style="left:868px;top:406px;width:33px;height:33px;background:#085F10"></div><div style="left:872.5px;top:413.0px;width:21px;height:19px;border-radius:50%;background:#000"></div><div class="t num" style="left:868px;width:30px;top:417.0px;font-size:11px;line-height:13px;letter-spacing:0.6px">33</div><div style="left:903px;top:406px;width:33px;height:33px;background:#085F10"></div><div style="left:910.5px;top:413.0px;width:21px;height:19px;border-radius:50%;background:#D63424"></div><div class="t num" style="left:906px;width:30px;top:417.0px;font-size:11px;line-height:13px;letter-spacing:0.6px">36</div><div style="left:518px;top:441px;width:33px;height:33px;background:#085F10"></div><div style="left:522.5px;top:448.0px;width:21px;height:19px;border-radius:50%;background:#000"></div><div class="t num" style="left:518px;width:30px;top:452.0px;font-size:11px;line-height:13px;letter-spacing:0.6px">2</div><div style="left:553px;top:441px;width:33px;height:33px;background:#085F10"></div><div style="left:560.5px;top:448.0px;width:21px;height:19px;border-radius:50%;background:#D63424"></div><div class="t num" style="left:556px;width:30px;top:452.0px;font-size:11px;line-height:13px;letter-spacing:0.6px">5</div><div style="left:588px;top:441px;width:33px;height:33px;background:#085F10"></div><div style="left:592.5px;top:448.0px;width:21px;height:19px;border-radius:50%;background:#000"></div><div class="t num" style="left:588px;width:30px;top:452.0px;font-size:11px;line-height:13px;letter-spacing:0.6px">8</div><div style="left:623px;top:441px;width:33px;height:33px;background:#085F10"></div><div style="left:630.5px;top:448.0px;width:21px;height:19px;border-radius:50%;background:#000"></div><div class="t num" style="left:626px;width:30px;top:452.0px;font-size:11px;line-height:13px;letter-spacing:0.6px">11</div><div style="left:658px;top:441px;width:33px;height:33px;background:#085F10"></div><div style="left:662.5px;top:448.0px;width:21px;height:19px;border-radius:50%;background:#D63424"></div><div class="t num" style="left:658px;width:30px;top:452.0px;font-size:11px;line-height:13px;letter-spacing:0.6px">14</div><div style="left:693px;top:441px;width:33px;height:33px;background:#085F10"></div><div style="left:700.5px;top:448.0px;width:21px;height:19px;border-radius:50%;background:#000"></div><div class="t num" style="left:696px;width:30px;top:452.0px;font-size:11px;line-height:13px;letter-spacing:0.6px">17</div><div style="left:728px;top:441px;width:33px;height:33px;background:#085F10"></div><div style="left:732.5px;top:448.0px;width:21px;height:19px;border-radius:50%;background:#000"></div><div class="t num" style="left:728px;width:30px;top:452.0px;font-size:11px;line-height:13px;letter-spacing:0.6px">20</div><div style="left:763px;top:441px;width:33px;height:33px;background:#085F10"></div><div style="left:770.5px;top:448.0px;width:21px;height:19px;border-radius:50%;background:#D63424"></div><div class="t num" style="left:766px;width:30px;top:452.0px;font-size:11px;line-height:13px;letter-spacing:0.6px">23</div><div style="left:798px;top:441px;width:33px;height:33px;background:#085F10"></div><div style="left:802.5px;top:448.0px;width:21px;height:19px;border-radius:50%;background:#000"></div><div class="t num" style="left:798px;width:30px;top:452.0px;font-size:11px;line-height:13px;letter-spacing:0.6px">26</div><div style="left:833px;top:441px;width:33px;height:33px;background:#085F10"></div><div style="left:840.5px;top:448.0px;width:21px;height:19px;border-radius:50%;background:#000"></div><div class="t num" style="left:836px;width:30px;top:452.0px;font-size:11px;line-height:13px;letter-spacing:0.6px">29</div><div style="left:868px;top:441px;width:33px;height:33px;background:#085F10"></div><div style="left:872.5px;top:448.0px;width:21px;height:19px;border-radius:50%;background:#D63424"></div><div class="t num" style="left:868px;width:30px;top:452.0px;font-size:11px;line-height:13px;letter-spacing:0.6px">32</div><div style="left:903px;top:441px;width:33px;height:33px;background:#085F10"></div><div style="left:910.5px;top:448.0px;width:21px;height:19px;border-radius:50%;background:#000"></div><div class="t num" style="left:906px;width:30px;top:452.0px;font-size:11px;line-height:13px;letter-spacing:0.6px">35</div><div style="left:518px;top:476px;width:33px;height:33px;background:#085F10"></div><div style="left:522.5px;top:483.0px;width:21px;height:19px;border-radius:50%;background:#D63424"></div><div class="t num" style="left:518px;width:30px;top:487.0px;font-size:11px;line-height:13px;letter-spacing:0.6px">1</div><div style="left:553px;top:476px;width:33px;height:33px;background:#085F10"></div><div style="left:560.5px;top:483.0px;width:21px;height:19px;border-radius:50%;background:#000"></div><div class="t num" style="left:556px;width:30px;top:487.0px;font-size:11px;line-height:13px;letter-spacing:0.6px">4</div><div style="left:588px;top:476px;width:33px;height:33px;background:#085F10"></div><div style="left:592.5px;top:483.0px;width:21px;height:19px;border-radius:50%;background:#D63424"></div><div class="t num" style="left:588px;width:30px;top:487.0px;font-size:11px;line-height:13px;letter-spacing:0.6px">7</div><div style="left:623px;top:476px;width:33px;height:33px;background:#085F10"></div><div style="left:630.5px;top:483.0px;width:21px;height:19px;border-radius:50%;background:#000"></div><div class="t num" style="left:626px;width:30px;top:487.0px;font-size:11px;line-height:13px;letter-spacing:0.6px">10</div><div style="left:658px;top:476px;width:33px;height:33px;background:#085F10"></div><div style="left:662.5px;top:483.0px;width:21px;height:19px;border-radius:50%;background:#000"></div><div class="t num" style="left:658px;width:30px;top:487.0px;font-size:11px;line-height:13px;letter-spacing:0.6px">13</div><div style="left:693px;top:476px;width:33px;height:33px;background:#085F10"></div><div style="left:700.5px;top:483.0px;width:21px;height:19px;border-radius:50%;background:#D63424"></div><div class="t num" style="left:696px;width:30px;top:487.0px;font-size:11px;line-height:13px;letter-spacing:0.6px">16</div><div style="left:728px;top:476px;width:33px;height:33px;background:#085F10"></div><div style="left:732.5px;top:483.0px;width:21px;height:19px;border-radius:50%;background:#D63424"></div><div class="t num" style="left:728px;width:30px;top:487.0px;font-size:11px;line-height:13px;letter-spacing:0.6px">19</div><div style="left:763px;top:476px;width:33px;height:33px;background:#085F10"></div><div style="left:770.5px;top:483.0px;width:21px;height:19px;border-radius:50%;background:#000"></div><div class="t num" style="left:766px;width:30px;top:487.0px;font-size:11px;line-height:13px;letter-spacing:0.6px">22</div><div style="left:798px;top:476px;width:33px;height:33px;background:#085F10"></div><div style="left:802.5px;top:483.0px;width:21px;height:19px;border-radius:50%;background:#D63424"></div><div class="t num" style="left:798px;width:30px;top:487.0px;font-size:11px;line-height:13px;letter-spacing:0.6px">25</div><div style="left:833px;top:476px;width:33px;height:33px;background:#085F10"></div><div style="left:840.5px;top:483.0px;width:21px;height:19px;border-radius:50%;background:#000"></div><div class="t num" style="left:836px;width:30px;top:487.0px;font-size:11px;line-height:13px;letter-spacing:0.6px">28</div><div style="left:868px;top:476px;width:33px;height:33px;background:#085F10"></div><div style="left:872.5px;top:483.0px;width:21px;height:19px;border-radius:50%;background:#000"></div><div class="t num" style="left:868px;width:30px;top:487.0px;font-size:11px;line-height:13px;letter-spacing:0.6px">31</div><div style="left:903px;top:476px;width:33px;height:33px;background:#085F10"></div><div style="left:910.5px;top:483.0px;width:21px;height:19px;border-radius:50%;background:#D63424"></div><div class="t num" style="left:906px;width:30px;top:487.0px;font-size:11px;line-height:13px;letter-spacing:0.6px">34</div><div style="left:542px;top:414px;width:20px;height:17px;background:#fff;border:1px solid #C8D8F0"></div><div class="chk" style="left:546px;top:416px;width:13px;height:13px;"><svg width="13" height="13" viewBox="0 0 13 13" style="position:absolute;left:-1px;top:-1px"><path d="M2.6 5.4 L5.3 8.3 L10 3.4" stroke="#21A121" stroke-width="2.3" fill="none"/></svg></div><div style="left:612px;top:414px;width:20px;height:17px;background:#fff;border:1px solid #C8D8F0"></div><div class="chk" style="left:616px;top:416px;width:13px;height:13px;"><svg width="13" height="13" viewBox="0 0 13 13" style="position:absolute;left:-1px;top:-1px"><path d="M2.6 5.4 L5.3 8.3 L10 3.4" stroke="#21A121" stroke-width="2.3" fill="none"/></svg></div><div style="left:682px;top:414px;width:20px;height:17px;background:#fff;border:1px solid #C8D8F0"></div><div class="chk" style="left:686px;top:416px;width:13px;height:13px;"><svg width="13" height="13" viewBox="0 0 13 13" style="position:absolute;left:-1px;top:-1px"><path d="M2.6 5.4 L5.3 8.3 L10 3.4" stroke="#21A121" stroke-width="2.3" fill="none"/></svg></div><div style="left:752px;top:414px;width:20px;height:17px;background:#fff;border:1px solid #C8D8F0"></div><div class="chk" style="left:756px;top:416px;width:13px;height:13px;"><svg width="13" height="13" viewBox="0 0 13 13" style="position:absolute;left:-1px;top:-1px"><path d="M2.6 5.4 L5.3 8.3 L10 3.4" stroke="#21A121" stroke-width="2.3" fill="none"/></svg></div><div style="left:822px;top:414px;width:20px;height:17px;background:#fff;border:1px solid #C8D8F0"></div><div class="chk" style="left:826px;top:416px;width:13px;height:13px;"><svg width="13" height="13" viewBox="0 0 13 13" style="position:absolute;left:-1px;top:-1px"><path d="M2.6 5.4 L5.3 8.3 L10 3.4" stroke="#21A121" stroke-width="2.3" fill="none"/></svg></div><div style="left:892px;top:414px;width:20px;height:17px;background:#fff;border:1px solid #C8D8F0"></div><div class="chk" style="left:896px;top:416px;width:13px;height:13px;"><svg width="13" height="13" viewBox="0 0 13 13" style="position:absolute;left:-1px;top:-1px"><path d="M2.6 5.4 L5.3 8.3 L10 3.4" stroke="#21A121" stroke-width="2.3" fill="none"/></svg></div><div style="left:542px;top:449px;width:20px;height:17px;background:#fff;border:1px solid #C8D8F0"></div><div class="chk" style="left:546px;top:451px;width:13px;height:13px;"></div><div style="left:612px;top:449px;width:20px;height:17px;background:#fff;border:1px solid #C8D8F0"></div><div class="chk" style="left:616px;top:451px;width:13px;height:13px;"></div><div style="left:682px;top:449px;width:20px;height:17px;background:#fff;border:1px solid #C8D8F0"></div><div class="chk" style="left:686px;top:451px;width:13px;height:13px;"><svg width="13" height="13" viewBox="0 0 13 13" style="position:absolute;left:-1px;top:-1px"><path d="M2.6 5.4 L5.3 8.3 L10 3.4" stroke="#21A121" stroke-width="2.3" fill="none"/></svg></div><div style="left:752px;top:449px;width:20px;height:17px;background:#fff;border:1px solid #C8D8F0"></div><div class="chk" style="left:756px;top:451px;width:13px;height:13px;"><svg width="13" height="13" viewBox="0 0 13 13" style="position:absolute;left:-1px;top:-1px"><path d="M2.6 5.4 L5.3 8.3 L10 3.4" stroke="#21A121" stroke-width="2.3" fill="none"/></svg></div><div style="left:822px;top:449px;width:20px;height:17px;background:#fff;border:1px solid #C8D8F0"></div><div class="chk" style="left:826px;top:451px;width:13px;height:13px;"></div><div style="left:892px;top:449px;width:20px;height:17px;background:#fff;border:1px solid #C8D8F0"></div><div class="chk" style="left:896px;top:451px;width:13px;height:13px;"></div><div style="left:542px;top:484px;width:20px;height:17px;background:#fff;border:1px solid #C8D8F0"></div><div class="chk" style="left:546px;top:486px;width:13px;height:13px;"></div><div style="left:612px;top:484px;width:20px;height:17px;background:#fff;border:1px solid #C8D8F0"></div><div class="chk" style="left:616px;top:486px;width:13px;height:13px;"></div><div style="left:682px;top:484px;width:20px;height:17px;background:#fff;border:1px solid #C8D8F0"></div><div class="chk" style="left:686px;top:486px;width:13px;height:13px;"><svg width="13" height="13" viewBox="0 0 13 13" style="position:absolute;left:-1px;top:-1px"><path d="M2.6 5.4 L5.3 8.3 L10 3.4" stroke="#21A121" stroke-width="2.3" fill="none"/></svg></div><div style="left:752px;top:484px;width:20px;height:17px;background:#fff;border:1px solid #C8D8F0"></div><div class="chk" style="left:756px;top:486px;width:13px;height:13px;"><svg width="13" height="13" viewBox="0 0 13 13" style="position:absolute;left:-1px;top:-1px"><path d="M2.6 5.4 L5.3 8.3 L10 3.4" stroke="#21A121" stroke-width="2.3" fill="none"/></svg></div><div style="left:822px;top:484px;width:20px;height:17px;background:#fff;border:1px solid #C8D8F0"></div><div class="chk" style="left:826px;top:486px;width:13px;height:13px;"></div><div style="left:892px;top:484px;width:20px;height:17px;background:#fff;border:1px solid #C8D8F0"></div><div class="chk hov" style="left:896px;top:486px;width:13px;height:13px;"></div><div style="left:940px;top:222px;width:40px;height:17px;background:#fff;border:1px solid #8FA8D0"></div><div class="chk" style="left:944px;top:224px;width:13px;height:13px;"></div><div class="t" style="left:961px;top:224.84px;font-size:12px;line-height:12px;color:#000;font-weight:normal;">2-4</div><div style="left:940px;top:258px;width:40px;height:17px;background:#fff;border:1px solid #8FA8D0"></div><div class="chk" style="left:944px;top:260px;width:13px;height:13px;"><svg width="13" height="13" viewBox="0 0 13 13" style="position:absolute;left:-1px;top:-1px"><path d="M2.6 5.4 L5.3 8.3 L10 3.4" stroke="#21A121" stroke-width="2.3" fill="none"/></svg></div><div class="t" style="left:961px;top:260.84px;font-size:12px;line-height:12px;color:#000;font-weight:normal;">1-4</div><div style="left:940px;top:413px;width:40px;height:17px;background:#fff;border:1px solid #8FA8D0"></div><div class="chk" style="left:944px;top:415px;width:13px;height:13px;"><svg width="13" height="13" viewBox="0 0 13 13" style="position:absolute;left:-1px;top:-1px"><path d="M2.6 5.4 L5.3 8.3 L10 3.4" stroke="#21A121" stroke-width="2.3" fill="none"/></svg></div><div class="t" style="left:961px;top:415.84px;font-size:12px;line-height:12px;color:#000;font-weight:normal;">3K</div><div style="left:940px;top:449px;width:40px;height:17px;background:#fff;border:1px solid #8FA8D0"></div><div class="chk" style="left:944px;top:451px;width:13px;height:13px;"></div><div class="t" style="left:961px;top:451.84px;font-size:12px;line-height:12px;color:#000;font-weight:normal;">2K</div><div style="left:940px;top:484px;width:40px;height:17px;background:#fff;border:1px solid #8FA8D0"></div><div class="chk" style="left:944px;top:486px;width:13px;height:13px;"></div><div class="t" style="left:961px;top:486.84px;font-size:12px;line-height:12px;color:#000;font-weight:normal;">1K</div><div style="left:572px;top:517px;width:40px;height:17px;background:#fff;border:1px solid #8FA8D0"></div><div class="chk" style="left:576px;top:519px;width:13px;height:13px;"></div><div class="t" style="left:593px;top:519.84px;font-size:12px;line-height:12px;color:#000;font-weight:normal;">1D</div><div style="left:708px;top:517px;width:40px;height:17px;background:#fff;border:1px solid #8FA8D0"></div><div class="chk" style="left:712px;top:519px;width:13px;height:13px;"><svg width="13" height="13" viewBox="0 0 13 13" style="position:absolute;left:-1px;top:-1px"><path d="M2.6 5.4 L5.3 8.3 L10 3.4" stroke="#21A121" stroke-width="2.3" fill="none"/></svg></div><div class="t" style="left:729px;top:519.84px;font-size:12px;line-height:12px;color:#000;font-weight:normal;">2D</div><div style="left:852px;top:517px;width:40px;height:17px;background:#fff;border:1px solid #8FA8D0"></div><div class="chk hov" style="left:856px;top:519px;width:13px;height:13px;"></div><div class="t" style="left:873px;top:519.84px;font-size:12px;line-height:12px;color:#000;font-weight:normal;">3D</div><div class="btn" style="left:519px;top:318px;width:92px;height:36px;"></div><div style="left:525px;top:327px;width:18px;height:18px"><svg width="18" height="18" viewBox="0 0 18 18"><circle cx="9" cy="9" r="7.8" fill="#12DC4A" stroke="#000" stroke-width="2.2"/><text x="9.2" y="12.8" font-size="9.5" font-family="Liberation Sans" font-weight="bold" text-anchor="middle" fill="#000" transform="translate(9 0) scale(0.75 1) translate(-9 0)">AЧ</text></svg></div><div class="t" style="left:476.5px;width:200px;text-align:center;top:324.69px;font-size:11px;line-height:11px;color:#000;font-weight:normal;">Автоставка</div><div class="t" style="left:476.5px;width:200px;text-align:center;top:337.69px;font-size:11px;line-height:11px;color:#000;font-weight:normal;">каре</div><div class="btn" style="left:520px;top:359px;width:91px;height:35px;"></div><div style="left:524px;top:368px;width:18px;height:18px"><svg width="18" height="18" viewBox="0 0 18 18"><circle cx="9" cy="9" r="7.8" fill="#12DC4A" stroke="#000" stroke-width="2.2"/><path d="M2.2 9 L7.5 9 M5.8 7.2 L7.6 9 L5.8 10.8" stroke="#E01818" stroke-width="1.1" fill="none"/><text x="12" y="12.8" font-size="9" font-family="Liberation Sans" font-weight="bold" text-anchor="middle" fill="#000" transform="translate(12 0) scale(0.7 1) translate(-12 0)">ПН</text></svg></div><div class="t" style="left:476.5px;width:200px;text-align:center;top:365.69px;font-size:11px;line-height:11px;color:#000;font-weight:normal;">Передать в</div><div class="t" style="left:476.5px;width:200px;text-align:center;top:378.69px;font-size:11px;line-height:11px;color:#000;font-weight:normal;">поле ПН</div><div class="btn" style="left:619px;top:318px;width:84px;height:36px;"></div><div style="left:627px;top:327px;width:18px;height:18px"><svg width="18" height="18" viewBox="0 0 18 18"><circle cx="9" cy="9" r="7.8" fill="#12DC4A" stroke="#000" stroke-width="2.2"/><path d="M8 6.5 L12.5 3.5 L14 5.5 L12 8.5 L13 10 L10 12 Z" fill="#3048D8"/><path d="M3.5 10 L7.5 8 L11 10.5 L9.5 13.5 L6 13 Z" fill="#E820D8"/></svg></div><div class="t" style="left:573.0px;width:200px;text-align:center;top:324.69px;font-size:11px;line-height:11px;color:#000;font-weight:normal;">Очистить</div><div class="t" style="left:573.0px;width:200px;text-align:center;top:337.69px;font-size:11px;line-height:11px;color:#000;font-weight:normal;">все</div><div class="btn" style="left:711px;top:318px;width:108px;height:36px;"></div><div style="left:715px;top:327px;width:18px;height:18px"><svg width="18" height="18" viewBox="0 0 18 18"><circle cx="9" cy="9" r="7.8" fill="#12DC4A" stroke="#000" stroke-width="2.2"/><path d="M4 6 L9 6 M6.5 3.5 L6.5 8.5" stroke="#F01818" stroke-width="1.4"/><path d="M4 13.5 L8.5 13.5" stroke="#2048F0" stroke-width="1.4"/><path d="M10 5.5 Q14.5 9 10.5 12.5" stroke="#000" stroke-width="1.3" fill="none"/><path d="M8.5 13.5 L11.5 11 L11.8 14 Z" fill="#000"/></svg></div><div class="t" style="left:676.5px;width:200px;text-align:center;top:324.69px;font-size:11px;line-height:11px;color:#000;font-weight:normal;">Инвертировать</div><div class="t" style="left:683.5px;width:200px;text-align:center;top:337.69px;font-size:11px;line-height:11px;color:#000;font-weight:normal;">выбор</div><div class="btn" style="left:519px;top:542px;width:92px;height:36px;"></div><div style="left:525px;top:551px;width:18px;height:18px"><svg width="18" height="18" viewBox="0 0 18 18"><circle cx="9" cy="9" r="7.8" fill="#12DC4A" stroke="#000" stroke-width="2.2"/><text x="9.2" y="12.8" font-size="9.5" font-family="Liberation Sans" font-weight="bold" text-anchor="middle" fill="#000" transform="translate(9 0) scale(0.75 1) translate(-9 0)">A2</text></svg></div><div class="t" style="left:476.5px;width:200px;text-align:center;top:548.69px;font-size:11px;line-height:11px;color:#000;font-weight:normal;">Автоставка</div><div class="t" style="left:476.5px;width:200px;text-align:center;top:561.69px;font-size:11px;line-height:11px;color:#000;font-weight:normal;">сплит</div><div class="btn" style="left:619px;top:542px;width:84px;height:36px;"></div><div style="left:627px;top:551px;width:18px;height:18px"><svg width="18" height="18" viewBox="0 0 18 18"><circle cx="9" cy="9" r="7.8" fill="#12DC4A" stroke="#000" stroke-width="2.2"/><path d="M8 6.5 L12.5 3.5 L14 5.5 L12 8.5 L13 10 L10 12 Z" fill="#3048D8"/><path d="M3.5 10 L7.5 8 L11 10.5 L9.5 13.5 L6 13 Z" fill="#E820D8"/></svg></div><div class="t" style="left:573.0px;width:200px;text-align:center;top:548.69px;font-size:11px;line-height:11px;color:#000;font-weight:normal;">Очистить</div><div class="t" style="left:573.0px;width:200px;text-align:center;top:561.69px;font-size:11px;line-height:11px;color:#000;font-weight:normal;">все</div><div class="btn" style="left:712px;top:543px;width:91px;height:35px;"></div><div style="left:716px;top:552px;width:18px;height:18px"><svg width="18" height="18" viewBox="0 0 18 18"><circle cx="9" cy="9" r="7.8" fill="#12DC4A" stroke="#000" stroke-width="2.2"/><path d="M2.2 9 L7.5 9 M5.8 7.2 L7.6 9 L5.8 10.8" stroke="#E01818" stroke-width="1.1" fill="none"/><text x="12" y="12.8" font-size="9" font-family="Liberation Sans" font-weight="bold" text-anchor="middle" fill="#000" transform="translate(12 0) scale(0.7 1) translate(-12 0)">ПН</text></svg></div><div class="t" style="left:669.0px;width:200px;text-align:center;top:549.69px;font-size:11px;line-height:11px;color:#000;font-weight:normal;">Передать в</div><div class="t" style="left:669.0px;width:200px;text-align:center;top:562.69px;font-size:11px;line-height:11px;color:#000;font-weight:normal;">поле ПН</div><div class="grp" style="left:827px;top:325px;width:89px;height:46px;"></div><div class="t" style="left:833px;top:320px;height:13px;width:81.8px;background:#ECE9D8"></div><div class="t" style="left:835px;top:320.69px;font-size:11px;line-height:11px;color:#0046D5;font-weight:normal;">Коэфф. умнож.</div><div style="left:842px;top:334px;width:57px;height:32px;background:#C0DCC0;border:1px solid #7F9DB9"></div><div class="t" style="left:847px;top:340.76px;font-size:18px;line-height:18px;color:#000;font-weight:normal;-webkit-text-stroke:0.5px #000">1</div><div style="left:879px;top:336px;width:18px;height:27px;background:#F8F8F4"></div><div class="btn" style="left:879px;top:336px;width:18px;height:13px;border-radius:2px;border-width:1px 1.5px"></div><div class="btn" style="left:879px;top:350px;width:18px;height:13px;border-radius:2px;border-width:1px 1.5px"></div><svg style="position:absolute;left:879px;top:336px" width="18" height="13" viewBox="0 0 18 13"><path d="M5.2 9.6 L9.0 5.6 L12.8 9.6 Z" fill="#000"/></svg><svg style="position:absolute;left:879px;top:350px" width="18" height="13" viewBox="0 0 18 13"><path d="M5.2 4.6 L12.8 4.6 L9.0 8.8 Z" fill="#000"/></svg><div class="grp" style="left:811px;top:549px;width:88px;height:45px;"></div><div class="t" style="left:817px;top:544px;height:13px;width:81.8px;background:#ECE9D8"></div><div class="t" style="left:819px;top:544.69px;font-size:11px;line-height:11px;color:#0046D5;font-weight:normal;">Коэфф. умнож.</div><div style="left:830px;top:557px;width:57px;height:32px;background:#C0DCC0;border:1px solid #7F9DB9"></div><div class="t" style="left:835px;top:563.76px;font-size:18px;line-height:18px;color:#000;font-weight:normal;-webkit-text-stroke:0.5px #000">1</div><div style="left:867px;top:559px;width:18px;height:27px;background:#F8F8F4"></div><div class="btn" style="left:867px;top:559px;width:18px;height:13px;border-radius:2px;border-width:1px 1.5px"></div><div class="btn" style="left:867px;top:573px;width:18px;height:13px;border-radius:2px;border-width:1px 1.5px"></div><svg style="position:absolute;left:867px;top:559px" width="18" height="13" viewBox="0 0 18 13"><path d="M5.2 9.6 L9.0 5.6 L12.8 9.6 Z" fill="#000"/></svg><svg style="position:absolute;left:867px;top:573px" width="18" height="13" viewBox="0 0 18 13"><path d="M5.2 4.6 L12.8 4.6 L9.0 8.8 Z" fill="#000"/></svg><div style="left:503px;top:637px;width:512px;height:1px;background:#fff"></div><div style="left:503px;top:658px;width:510px;height:136px;border:1px solid #919B9C;background:linear-gradient(180deg,#FCFCFE,#F4F3EE)"></div><div style="left:505px;top:640px;width:219px;height:19px;border:1px solid #919B9C;border-bottom:none;border-radius:3px 3px 0 0;background:linear-gradient(180deg,#FFFFFF,#F3F3EF 60%,#E5E4DB)"></div><div class="t" style="left:511px;top:644.69px;font-size:11px;line-height:11px;color:#000;font-weight:normal;">Частота - Zero, шансы, дюжины, колонки</div><div style="left:726px;top:640px;width:158px;height:19px;border:1px solid #919B9C;border-bottom:none;border-radius:3px 3px 0 0;background:linear-gradient(180deg,#FFFFFF,#F3F3EF 60%,#E5E4DB)"></div><div class="t" style="left:732px;top:644.69px;font-size:11px;line-height:11px;color:#000;font-weight:normal;">Частота - сиклайны, сектора</div><div style="left:885px;top:638px;width:45px;height:21px;border:1px solid #919B9C;border-bottom:none;border-radius:3px 3px 0 0;background:#FCFCFE;box-shadow:inset 0 2px 0 #FFC83C"></div><div style="left:885px;top:638px;width:45px;height:1px;background:#E68B2C;border-radius:3px 3px 0 0"></div><div class="t" style="left:892px;top:642.69px;font-size:11px;line-height:11px;color:#000;font-weight:normal;">MD5</div><div class="btn" style="left:508px;top:668px;width:71px;height:90px;"></div><div class="t" style="left:443.5px;width:200px;text-align:center;top:695.69px;font-size:11px;line-height:11px;color:#000;font-weight:normal;">Очистка</div><div class="t" style="left:443.5px;width:200px;text-align:center;top:708.69px;font-size:11px;line-height:11px;color:#000;font-weight:normal;">Вставка</div><div class="t" style="left:443.5px;width:200px;text-align:center;top:721.69px;font-size:11px;line-height:11px;color:#000;font-weight:normal;">Расчет MD5</div><div class="btn" style="left:583px;top:668px;width:79px;height:18px;"></div><div class="t" style="left:522.5px;width:200px;text-align:center;top:672.69px;font-size:11px;line-height:11px;color:#000;font-weight:normal;">Очистить</div><div class="btn" style="left:583px;top:692px;width:79px;height:31px;"></div><div class="t" style="left:522.5px;width:200px;text-align:center;top:696.69px;font-size:11px;line-height:11px;color:#000;font-weight:normal;">Очистить и</div><div class="t" style="left:522.5px;width:200px;text-align:center;top:708.69px;font-size:11px;line-height:11px;color:#000;font-weight:normal;">вставить</div><div class="btn" style="left:583px;top:728px;width:79px;height:30px;"></div><div class="t" style="left:522.5px;width:200px;text-align:center;top:737.69px;font-size:11px;line-height:11px;color:#000;font-weight:normal;">Расчет MD5</div><div class="btn" style="left:511px;top:763px;width:148px;height:28px;"></div><div class="t" style="left:485.0px;width:200px;text-align:center;top:766.69px;font-size:11px;line-height:11px;color:#000;font-weight:normal;">Очистить и  вставить</div><div class="t" style="left:485.0px;width:200px;text-align:center;top:779.69px;font-size:11px;line-height:11px;color:#000;font-weight:normal;">во вспом. строку</div><div class="t" style="left:668px;top:663.69px;font-size:11px;line-height:11px;color:#000;font-weight:normal;">Исходная строка</div><div style="left:667px;top:678px;width:285px;height:21px;background:#fff;border:1px solid #7F9DB9"></div><div class="t" style="left:671px;top:682.69px;font-size:11px;line-height:11px;color:#000;font-weight:normal;letter-spacing:-0.24px">Number(s): (12) server keyword = 0L18RpDWyGitDFF4</div><div class="btn" style="left:956px;top:679px;width:23px;height:23px;"></div><svg style="position:absolute;left:958px;top:681px" width="19" height="19" viewBox="0 0 19 19"><circle cx="9.5" cy="9.5" r="8.2" fill="#12DC4A" stroke="#000" stroke-width="2.2"/><text x="9.5" y="9.6" font-size="7" font-weight="bold" font-family="Liberation Sans" text-anchor="middle" fill="#000">MA</text><text x="7" y="15.6" font-size="7" font-weight="bold" font-family="Liberation Sans" text-anchor="middle" fill="#000">5</text></svg><div class="t" style="left:668px;top:708.69px;font-size:11px;line-height:11px;color:#000;font-weight:normal;">Выходная строка MD5</div><div class="chk" style="left:803px;top:704px;width:13px;height:13px;"></div><div class="t" style="left:820px;top:705.69px;font-size:11px;line-height:11px;color:#000;font-weight:normal;">регистр  - маленький</div><div style="left:667px;top:724px;width:285px;height:19px;border:1px solid #7F9DB9;background:#00FF00;box-shadow:inset 0 0 0 2px #D82828"></div><div class="t" style="left:671px;top:728.69px;font-size:11px;line-height:11px;color:#000;font-weight:normal;letter-spacing:-0.13px">84bb0270f2f2283abb96d00e87b253f9</div><div class="t" style="left:668px;top:748.69px;font-size:11px;line-height:11px;color:#000;font-weight:normal;">Вспомогательная строка: сюда можно все скопировать</div><div style="left:667px;top:764px;width:285px;height:19px;border:1px solid #7F9DB9;background:#00FF00;box-shadow:inset 0 0 0 2px #D82828"></div><div class="t" style="left:671px;top:768.69px;font-size:11px;line-height:11px;color:#000;font-weight:normal;letter-spacing:-0.13px">84bb0270f2f2283abb96d00e87b253f9</div><div class="btn" style="left:956px;top:759px;width:23px;height:23px;"></div><svg style="position:absolute;left:958px;top:761px" width="19" height="19" viewBox="0 0 19 19"><circle cx="9.5" cy="9.5" r="8.2" fill="#12DC4A" stroke="#000" stroke-width="2.2"/><text x="9.5" y="9.6" font-size="7" font-weight="bold" font-family="Liberation Sans" text-anchor="middle" fill="#000">MA</text><text x="7" y="15.6" font-size="7" font-weight="bold" font-family="Liberation Sans" text-anchor="middle" fill="#000">5</text><path d="M10.5 9.5 L14.5 12.3 L10.5 15 Z" fill="#2040F0"/></svg><div style="left:501px;top:796px;width:516px;height:3px;background:linear-gradient(180deg,#B9B6A6,#ACA899 40%,#9D9A8B)"></div></div></body></html>
